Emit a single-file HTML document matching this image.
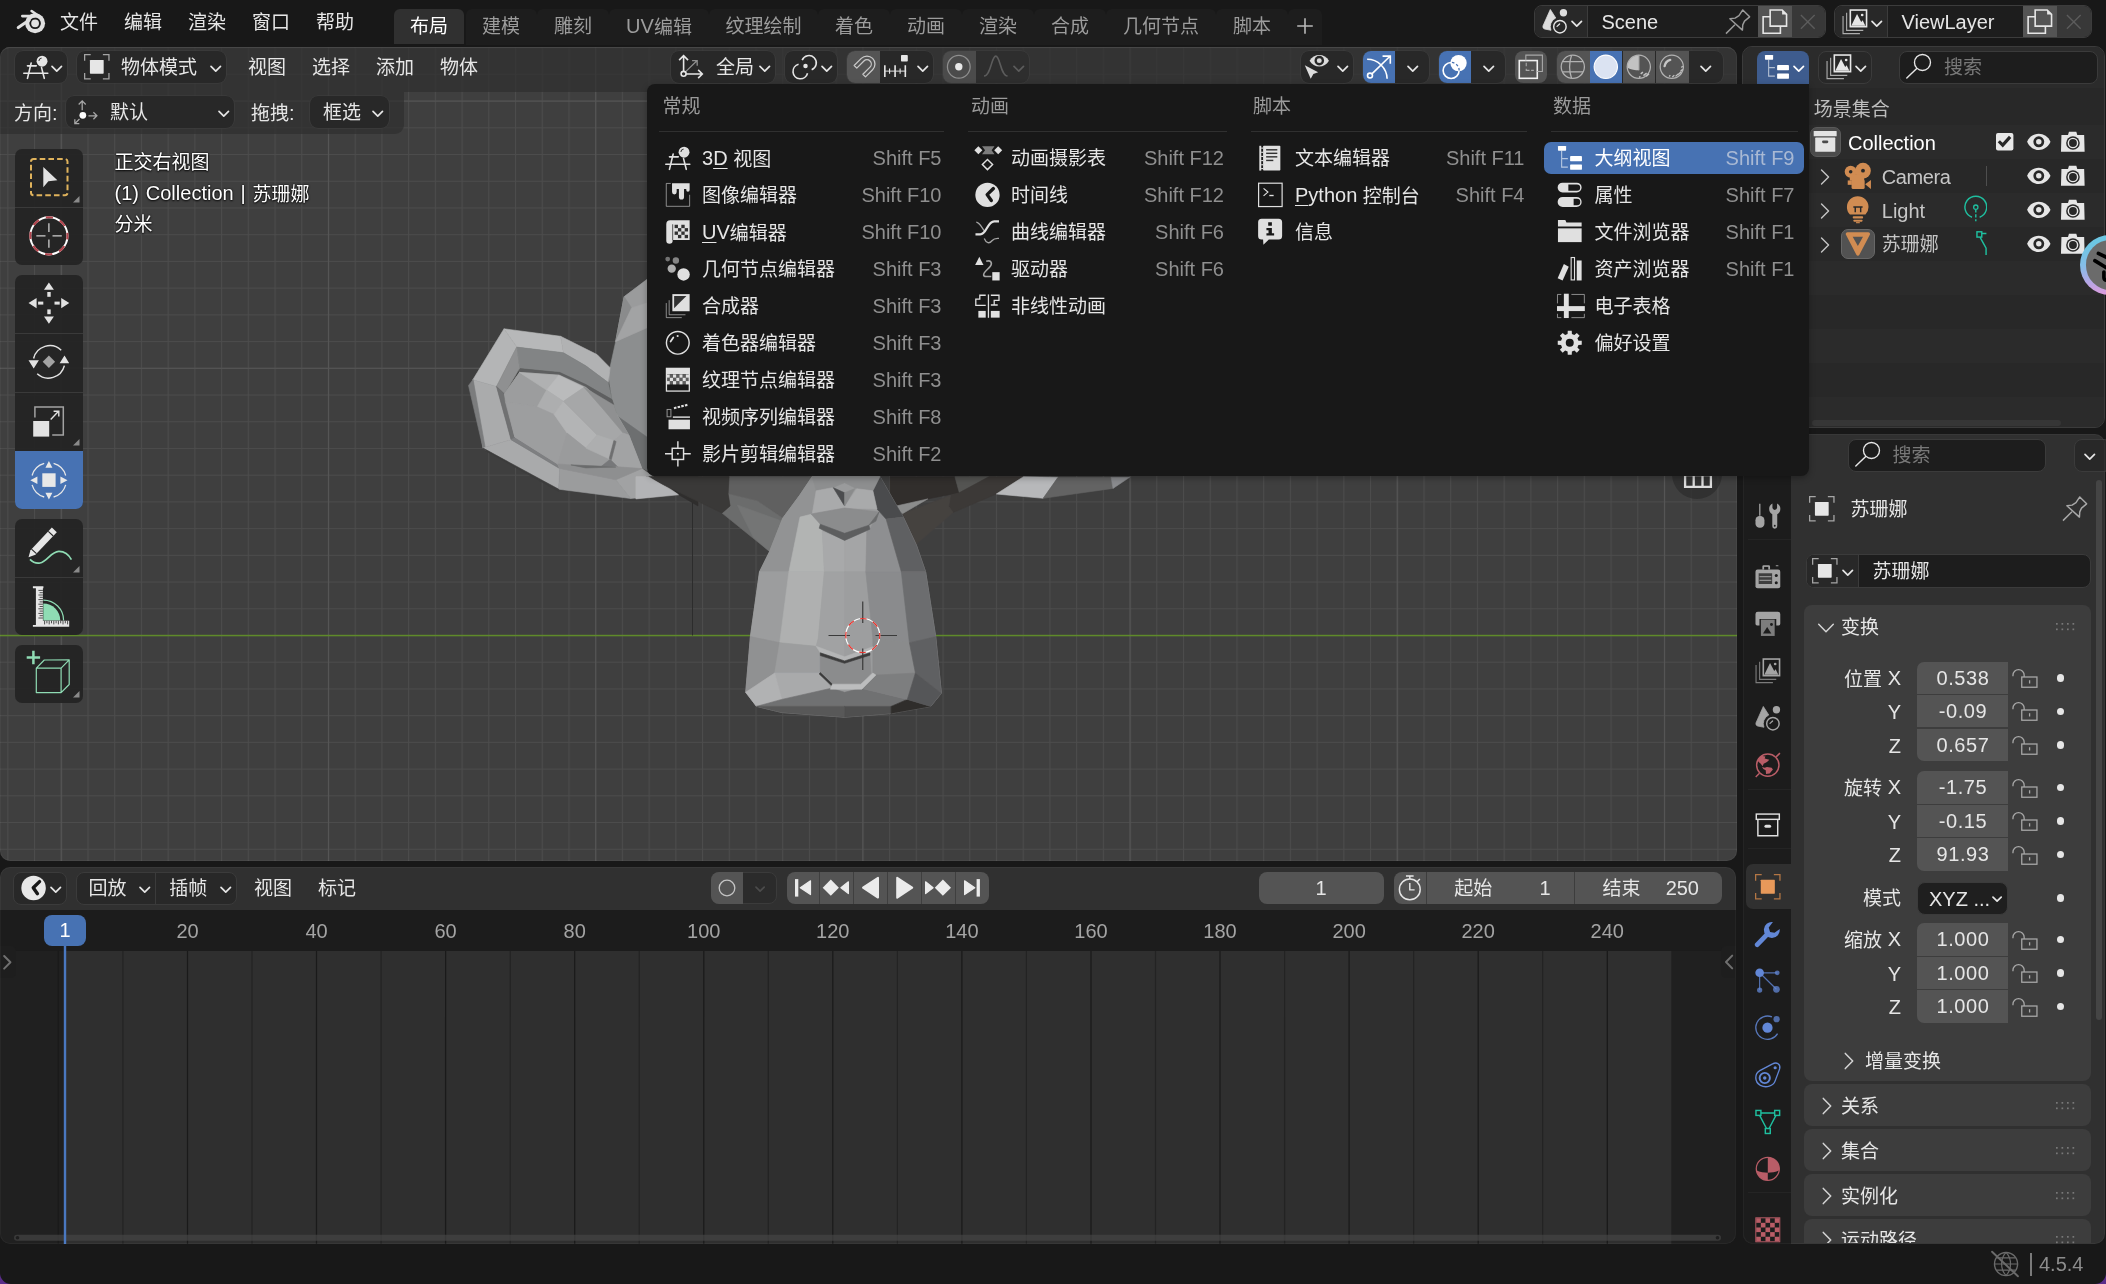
<!DOCTYPE html>
<html lang="zh-CN"><head><meta charset="utf-8"><title>Blender</title>
<style>
html,body{margin:0;padding:0;}
body{width:2106px;height:1284px;overflow:hidden;position:relative;background:#181818;font-family:"Liberation Sans","Noto Sans CJK SC",sans-serif;font-size:19px;color:#e6e6e6;}
.t{position:absolute;white-space:nowrap;}
.l{font-size:20px;}
.m{position:relative;top:-1px;}
u{text-decoration-thickness:1.2px;text-underline-offset:3px;}
.b{position:absolute;box-sizing:border-box;}
.i{position:absolute;overflow:visible;}
.sh{text-shadow:0 0 2px rgba(0,0,0,.9),0 1px 2px rgba(0,0,0,.8);}
</style></head><body><div id="root" style="position:absolute;left:0;top:0;width:2106px;height:1284px;will-change:transform;">
<svg class="i" viewBox="15 7 32 32" style="left:15.0px;top:7.0px;width:32.0px;height:32.0px;color:#e0e0e0;"><circle cx="35.1" cy="23.3" r="10" fill="currentColor"/><circle cx="35.1" cy="23.3" r="4.85" stroke="#181818" stroke-width="1.9" fill="none"/><path d="M31.6 11L39.6 16.6M22.3 16.1H35" stroke="currentColor" fill="none" stroke-width="2.6" stroke-linecap="round"/><path d="M18.3 27.6L29 20.2" stroke="currentColor" fill="none" stroke-width="3.1" stroke-linecap="round"/></svg>
<div class="t " style="top:8.0px;line-height:30px;color:#e6e6e6;left:60.0px;">文件</div>
<div class="t " style="top:8.0px;line-height:30px;color:#e6e6e6;left:124.0px;">编辑</div>
<div class="t " style="top:8.0px;line-height:30px;color:#e6e6e6;left:188.0px;">渲染</div>
<div class="t " style="top:8.0px;line-height:30px;color:#e6e6e6;left:252.0px;">窗口</div>
<div class="t " style="top:8.0px;line-height:30px;color:#e6e6e6;left:316.0px;">帮助</div>
<div class="b " style="left:466.0px;top:8.7px;width:856.0px;height:36.8px;background:#1d1d1d;border-radius:6px 6px 0 0;"></div>
<div class="b " style="left:466.0px;top:8.7px;width:71.0px;height:21.3px;background:#181818;border-radius:0px;"></div>
<div class="b " style="left:466.0px;top:8.7px;width:71.0px;height:21.3px;background:#1d1d1d;border-radius:6px 6px 0 0;"></div>
<div class="b " style="left:537.0px;top:8.7px;width:72.0px;height:21.3px;background:#181818;border-radius:0px;"></div>
<div class="b " style="left:537.0px;top:8.7px;width:72.0px;height:21.3px;background:#1d1d1d;border-radius:6px 6px 0 0;"></div>
<div class="b " style="left:609.0px;top:8.7px;width:100.0px;height:21.3px;background:#181818;border-radius:0px;"></div>
<div class="b " style="left:609.0px;top:8.7px;width:100.0px;height:21.3px;background:#1d1d1d;border-radius:6px 6px 0 0;"></div>
<div class="b " style="left:709.0px;top:8.7px;width:109.0px;height:21.3px;background:#181818;border-radius:0px;"></div>
<div class="b " style="left:709.0px;top:8.7px;width:109.0px;height:21.3px;background:#1d1d1d;border-radius:6px 6px 0 0;"></div>
<div class="b " style="left:818.0px;top:8.7px;width:72.0px;height:21.3px;background:#181818;border-radius:0px;"></div>
<div class="b " style="left:818.0px;top:8.7px;width:72.0px;height:21.3px;background:#1d1d1d;border-radius:6px 6px 0 0;"></div>
<div class="b " style="left:890.0px;top:8.7px;width:72.0px;height:21.3px;background:#181818;border-radius:0px;"></div>
<div class="b " style="left:890.0px;top:8.7px;width:72.0px;height:21.3px;background:#1d1d1d;border-radius:6px 6px 0 0;"></div>
<div class="b " style="left:962.0px;top:8.7px;width:72.0px;height:21.3px;background:#181818;border-radius:0px;"></div>
<div class="b " style="left:962.0px;top:8.7px;width:72.0px;height:21.3px;background:#1d1d1d;border-radius:6px 6px 0 0;"></div>
<div class="b " style="left:1034.0px;top:8.7px;width:72.0px;height:21.3px;background:#181818;border-radius:0px;"></div>
<div class="b " style="left:1034.0px;top:8.7px;width:72.0px;height:21.3px;background:#1d1d1d;border-radius:6px 6px 0 0;"></div>
<div class="b " style="left:1106.0px;top:8.7px;width:110.0px;height:21.3px;background:#181818;border-radius:0px;"></div>
<div class="b " style="left:1106.0px;top:8.7px;width:110.0px;height:21.3px;background:#1d1d1d;border-radius:6px 6px 0 0;"></div>
<div class="b " style="left:1216.0px;top:8.7px;width:72.0px;height:21.3px;background:#181818;border-radius:0px;"></div>
<div class="b " style="left:1216.0px;top:8.7px;width:72.0px;height:21.3px;background:#1d1d1d;border-radius:6px 6px 0 0;"></div>
<div class="b " style="left:1288.0px;top:8.7px;width:34.0px;height:21.3px;background:#181818;border-radius:0px;"></div>
<div class="b " style="left:1288.0px;top:8.7px;width:34.0px;height:21.3px;background:#1d1d1d;border-radius:6px 6px 0 0;"></div>
<div class="b " style="left:394.0px;top:8.9px;width:70.1px;height:35.1px;background:#303030;border-radius:6px 6px 0 0;"></div>
<div class="t " style="top:12.0px;line-height:30px;color:#ffffff;left:129.0px;width:600px;text-align:center;">布局</div>
<div class="t " style="top:12.0px;line-height:30px;color:#9c9c9c;left:201.0px;width:600px;text-align:center;">建模</div>
<div class="t " style="top:12.0px;line-height:30px;color:#9c9c9c;left:273.0px;width:600px;text-align:center;">雕刻</div>
<div class="t " style="top:12.0px;line-height:30px;color:#9c9c9c;left:359.0px;width:600px;text-align:center;"><span class="l m">UV</span>编辑</div>
<div class="t " style="top:12.0px;line-height:30px;color:#9c9c9c;left:463.5px;width:600px;text-align:center;">纹理绘制</div>
<div class="t " style="top:12.0px;line-height:30px;color:#9c9c9c;left:554.0px;width:600px;text-align:center;">着色</div>
<div class="t " style="top:12.0px;line-height:30px;color:#9c9c9c;left:626.0px;width:600px;text-align:center;">动画</div>
<div class="t " style="top:12.0px;line-height:30px;color:#9c9c9c;left:698.0px;width:600px;text-align:center;">渲染</div>
<div class="t " style="top:12.0px;line-height:30px;color:#9c9c9c;left:770.0px;width:600px;text-align:center;">合成</div>
<div class="t " style="top:12.0px;line-height:30px;color:#9c9c9c;left:861.0px;width:600px;text-align:center;">几何节点</div>
<div class="t " style="top:12.0px;line-height:30px;color:#9c9c9c;left:952.0px;width:600px;text-align:center;">脚本</div>
<svg class="i" style="left:1296px;top:17px;width:18px;height:18px" viewBox="0 0 18 18"><path d="M9 1.2V16.8M1.2 9H16.8" stroke="#b8b8b8" stroke-width="1.6" fill="none"/></svg>
<div class="b " style="left:1534.0px;top:5.0px;width:292.0px;height:33.0px;background:#1d1d1d;border-radius:8px;border:1px solid #3c3c3c;overflow:hidden;"><div class="b" style="left:0;top:0;width:52.5px;height:33px;background:#282828;border-right:1px solid #3c3c3c"></div><div class="b" style="left:222.5px;top:0;width:34px;height:33px;background:#545454"></div><div class="b" style="left:256.5px;top:0;width:36px;height:33px;background:#383838"></div></div>
<svg class="i" viewBox="0 0 16 16" style="left:1542.2px;top:9.2px;width:25.6px;height:25.6px;color:#e6e6e6;"><path d="M5.2 .3L8.6 5.6A6.04 6.04 0 0 0 5.6 13.3L1.6 12.5Q.2 12 .6 10.6Z" fill="#dcdcdc" stroke="#dcdcdc" stroke-width=".5" stroke-linejoin="round"/><circle cx="13.4" cy="2.35" r="2.3" fill="#dcdcdc"/><circle cx="11.2" cy="11.05" r="3.9" stroke="#e6e6e6" fill="none" stroke-width=".9"/><path d="M9.4 10.85L11 9.4" stroke="#e6e6e6" fill="none" stroke-width=".8" stroke-linecap="round"/></svg>
<svg class="i" style="left:1570.0px;top:16.8px;width:13.5px;height:13.5px" viewBox="-6.73 -6.73 13.46 13.46"><path d="M-4.73 -2.36 L0 2.36 L4.73 -2.36" fill="none" stroke="#e6e6e6" stroke-width="1.7" stroke-linecap="round" stroke-linejoin="round"/></svg>
<div class="t " style="top:7.2px;line-height:30px;color:#e6e6e6;left:1601.5px;"><span class="l">Scene</span></div>
<svg class="i" viewBox="0 0 16 16" style="left:1725.2px;top:9.2px;width:25.6px;height:25.6px;color:#9a9a9a;"><path d="M3.05 6.15L6.3 5.7L8.75 4.1L11.1 .6L15.4 4.9L12.2 7.55L11.1 9.9L10.9 13.2ZM.6 15.4L6.2 9.8" stroke="currentColor" fill="none" stroke-width=".9" stroke-linejoin="round"/></svg>
<svg class="i" viewBox="0 0 16 16" style="left:1761.5px;top:9.2px;width:25.6px;height:25.6px;color:#e6e6e6;"><path d="M5.1 .65H12.6L15.35 3.4V10.7H5.1Z" stroke="currentColor" fill="none" stroke-width="1"/><path d="M12.6 .65V3.4H15.35Z" fill="currentColor"/><path d="M5.1 4.8H.7V15.2H11.5V10.7" stroke="currentColor" fill="none" stroke-width="1"/></svg>
<svg class="i" viewBox="0 0 16 16" style="left:1795.4px;top:9.2px;width:25.6px;height:25.6px;color:#5c5c5c;"><path d="M3.7 3.7L12.3 12.3M12.3 3.7L3.7 12.3" stroke="currentColor" fill="none" stroke-width=".85"/></svg>
<div class="b " style="left:1834.0px;top:5.0px;width:258.0px;height:33.0px;background:#1d1d1d;border-radius:8px;border:1px solid #3c3c3c;overflow:hidden;"><div class="b" style="left:0;top:0;width:52.5px;height:33px;background:#282828;border-right:1px solid #3c3c3c"></div><div class="b" style="left:188.2px;top:0;width:34.2px;height:33px;background:#545454"></div><div class="b" style="left:222.4px;top:0;width:36px;height:33px;background:#383838"></div></div>
<svg class="i" viewBox="0 0 16 16" style="left:1842.0px;top:9.0px;width:25.6px;height:25.6px;color:#e6e6e6;"><rect x="5.2" y=".65" width="10.15" height="10.4" stroke="currentColor" fill="none" stroke-width="1"/><path d="M5.8 10.5L9.4 3.2L12 8.2L12.9 7L14.6 10.5Z" fill="currentColor"/><circle cx="12.6" cy="3.75" r=".85" fill="currentColor"/><path d="M2.9 2.3V13.4H13.3M.65 4.4V15.4H11.2" stroke="currentColor" fill="none" stroke-width=".7" opacity=".7"/></svg>
<svg class="i" style="left:1869.8px;top:16.8px;width:13.5px;height:13.5px" viewBox="-6.73 -6.73 13.46 13.46"><path d="M-4.73 -2.36 L0 2.36 L4.73 -2.36" fill="none" stroke="#e6e6e6" stroke-width="1.7" stroke-linecap="round" stroke-linejoin="round"/></svg>
<div class="t " style="top:7.2px;line-height:30px;color:#e6e6e6;left:1901.5px;"><span class="l">ViewLayer</span></div>
<svg class="i" viewBox="0 0 16 16" style="left:2027.3px;top:9.2px;width:25.6px;height:25.6px;color:#e6e6e6;"><path d="M5.1 .65H12.6L15.35 3.4V10.7H5.1Z" stroke="currentColor" fill="none" stroke-width="1"/><path d="M12.6 .65V3.4H15.35Z" fill="currentColor"/><path d="M5.1 4.8H.7V15.2H11.5V10.7" stroke="currentColor" fill="none" stroke-width="1"/></svg>
<svg class="i" viewBox="0 0 16 16" style="left:2061.2px;top:9.2px;width:25.6px;height:25.6px;color:#5c5c5c;"><path d="M3.7 3.7L12.3 12.3M12.3 3.7L3.7 12.3" stroke="currentColor" fill="none" stroke-width=".85"/></svg>
<div class="b" style="left:0.0px;top:46.5px;width:1737.0px;height:814.0px;background:#3f3f3f;border-radius:10px;overflow:hidden;">
<svg class="i" style="left:0;top:0;width:1737.0px;height:814.0px" viewBox="0 46.5 1737.0 814.0">
<defs>
<pattern id="g1" x="60.75" y="634.5" width="26.72" height="26.72" patternUnits="userSpaceOnUse"><path d="M0 .5H26.72M.5 0V26.72" stroke="#4c4c4c" stroke-width="1.1" fill="none"/></pattern>
<pattern id="g2" x="60.75" y="634.5" width="267.2" height="267.2" patternUnits="userSpaceOnUse"><path d="M0 .5H267.2M.5 0V267.2" stroke="#555555" stroke-width="1.2" fill="none"/></pattern>
</defs>
<rect x="0" y="46" width="1737" height="815" fill="url(#g1)"/>
<rect x="0" y="46" width="1737" height="815" fill="url(#g2)"/>
<rect x="0" y="634.3" width="1737" height="1.5" fill="#5f8a2a"/>
<rect x="692" y="476" width="1" height="159" fill="#2c2c2c"/>

<g>
<polygon points="647.5,278.4 624.2,296.2 615.7,341.0 608.3,374.7 612.0,399.0 617.6,415.8 628.8,434.5 641.9,468.1 649.4,471.9 649.4,278.4" fill="#8c8e8f" stroke="#8c8e8f" stroke-width=".6"/>
<polygon points="624.2,296.2 649.4,277.5 649.4,326.1 615.7,341.0" fill="#9a9b9c" stroke="#9a9b9c" stroke-width=".6"/>
<polygon points="624.2,296.2 631.6,307.4 615.7,341.0" fill="#8a8b8c" stroke="#8a8b8c" stroke-width=".6"/>
<polygon points="631.6,307.4 649.4,301.8 649.4,326.1 615.7,341.0" fill="#a2a3a4" stroke="#a2a3a4" stroke-width=".6"/>
<polygon points="617.6,415.8 649.4,438.2 649.4,472.8 641.9,468.1 628.8,434.5" fill="#6d6f70" stroke="#6d6f70" stroke-width=".6"/>
<polygon points="641.9,468.1 649.4,471.9 698.0,471.9 698.0,501.8 677.4,493.4" fill="#444444" stroke="#444444" stroke-width=".6"/>
<polygon points="647.5,470.9 698.0,475.6 698.0,505.5 677.4,493.4" fill="#2f2e2d" stroke="#2f2e2d" stroke-width=".6"/>
<polygon points="504.0,328.3 560.6,335.8 563.4,352.2 516.7,346.6" fill="#b7b8b9" stroke="#b7b8b9" stroke-width=".6"/>
<polygon points="560.6,335.8 597.1,354.1 610.1,367.2 608.3,382.1 585.8,365.3 563.4,352.2" fill="#b1b2b3" stroke="#b1b2b3" stroke-width=".6"/>
<polygon points="504.0,328.3 516.7,346.6 496.5,385.9 472.8,379.3" fill="#b4b5b6" stroke="#b4b5b6" stroke-width=".6"/>
<polygon points="472.8,379.3 496.5,385.9 511.1,439.2 483.0,447.6" fill="#aaabac" stroke="#aaabac" stroke-width=".6"/>
<polygon points="468.5,385.0 473.1,379.0 485.8,450.4 483.0,447.6" fill="#7b7c7d" stroke="#7b7c7d" stroke-width=".6"/>
<polygon points="483.0,447.6 511.1,439.2 559.7,468.1 558.7,488.7" fill="#a9aaab" stroke="#a9aaab" stroke-width=".6"/>
<polygon points="558.7,488.7 559.7,468.1 615.7,479.3 630.7,498.0" fill="#9b9c9d" stroke="#9b9c9d" stroke-width=".6"/>
<polygon points="615.7,479.3 641.9,468.1 677.4,493.4 630.7,498.0" fill="#a1a2a3" stroke="#a1a2a3" stroke-width=".6"/>
<polygon points="483.0,447.6 485.8,450.4 558.7,490.9 558.7,488.7" fill="#3d3d3d" stroke="#3d3d3d" stroke-width=".6"/>
<polygon points="516.7,346.6 563.4,352.2 585.8,365.3 608.3,382.1 612.0,399.0 585.8,384.0 559.7,371.9 519.5,368.1" fill="#828485" stroke="#828485" stroke-width=".6"/>
<polygon points="519.5,368.1 559.7,371.9 585.8,384.0 612.0,399.0 613.9,404.6 584.0,387.4 558.7,375.0 518.6,371.9" fill="#5e5f60" stroke="#5e5f60" stroke-width=".6"/>
<polygon points="516.7,346.6 519.5,368.1 504.5,393.4 496.5,385.9" fill="#8f9091" stroke="#8f9091" stroke-width=".6"/>
<polygon points="496.5,385.9 504.5,393.4 514.8,436.4 511.1,439.2" fill="#707172" stroke="#707172" stroke-width=".6"/>
<polygon points="511.1,439.2 514.8,436.4 557.8,463.5 559.7,468.1" fill="#7e7f81" stroke="#7e7f81" stroke-width=".6"/>
<polygon points="519.5,371.9 559.7,374.7 585.8,386.8 615.7,412.1 628.8,434.5 641.9,468.1 615.7,479.3 559.7,468.1 557.8,463.5 514.8,436.4 504.5,393.4" fill="#a3a4a5" stroke="#a3a4a5" stroke-width=".6"/>
<polygon points="504.5,393.4 519.5,371.9 546.6,389.6 537.2,406.4 505.5,401.8" fill="#9c9d9e" stroke="#9c9d9e" stroke-width=".6"/>
<polygon points="519.5,371.9 558.7,374.7 546.6,389.6" fill="#b0b1b2" stroke="#b0b1b2" stroke-width=".6"/>
<polygon points="546.6,389.6 558.7,374.7 584.0,386.8 563.4,400.8" fill="#babbbc" stroke="#babbbc" stroke-width=".6"/>
<polygon points="537.2,406.4 546.6,389.6 563.4,400.8 554.1,413.9" fill="#adaeaf" stroke="#adaeaf" stroke-width=".6"/>
<polygon points="505.5,401.8 537.2,406.4 554.1,413.9 567.1,432.6 557.8,463.5 514.8,436.4" fill="#9d9e9f" stroke="#9d9e9f" stroke-width=".6"/>
<polygon points="554.1,413.9 563.4,400.8 597.1,434.5 585.8,447.6 567.1,432.6" fill="#b3b4b5" stroke="#b3b4b5" stroke-width=".6"/>
<polygon points="563.4,400.8 584.0,386.8 604.5,410.2 623.2,432.6 613.9,440.1 597.1,434.5" fill="#a6a7a8" stroke="#a6a7a8" stroke-width=".6"/>
<polygon points="584.0,386.8 613.9,404.6 617.6,415.8 628.8,434.5 623.2,432.6 604.5,410.2" fill="#8f9091" stroke="#8f9091" stroke-width=".6"/>
<polygon points="567.1,432.6 585.8,447.6 610.1,458.8 600.8,466.3 570.9,464.4 557.8,463.5" fill="#9a9b9c" stroke="#9a9b9c" stroke-width=".6"/>
<polygon points="585.8,447.6 597.1,434.5 613.9,440.1 610.1,458.8" fill="#adaeaf" stroke="#adaeaf" stroke-width=".6"/>
<polygon points="613.9,440.1 623.2,432.6 628.8,434.5 641.9,468.1 617.6,466.3 610.1,458.8" fill="#a2a3a4" stroke="#a2a3a4" stroke-width=".6"/>
<polygon points="613.9,440.1 616.1,441.0 611.3,459.2 609.2,457.9" fill="#6e6f70" stroke="#6e6f70" stroke-width=".6"/>
<polygon points="610.1,458.8 617.6,466.3 600.8,466.3" fill="#77787a" stroke="#77787a" stroke-width=".6"/>
<polygon points="570.9,464.4 600.8,466.3 617.6,466.3 641.9,468.1 615.7,479.3 559.7,468.1 557.8,463.5" fill="#8e8f90" stroke="#8e8f90" stroke-width=".6"/>
<polygon points="570.9,464.4 597.1,465.5 615.7,466.6 585.8,467.4" fill="#6a6b6c" stroke="#6a6b6c" stroke-width=".6"/>
<polygon points="729.1,476.1 812.2,476.1 800.0,494.3 782.8,517.6 757.5,500.4 728.1,493.3" fill="#606060" stroke="#606060" stroke-width=".6"/>
<polygon points="728.1,493.3 757.5,500.4 782.8,517.6 769.6,551.0 722.0,512.5 730.1,505.4" fill="#6b6c6c" stroke="#6b6c6c" stroke-width=".6"/>
<polygon points="737.2,504.4 781.8,520.6 769.6,551.0 753.4,536.8" fill="#747575" stroke="#747575" stroke-width=".6"/>
<polygon points="646.1,476.1 729.1,476.1 728.1,493.3 730.1,505.4 722.0,512.5" fill="#3a3938" stroke="#3a3938" stroke-width=".6"/>
<polygon points="635.9,476.1 648.1,476.1 678.5,494.3 635.9,498.4" fill="#b3b4b6" stroke="#b3b4b6" stroke-width=".6"/>
<polygon points="890.1,476.2 954.9,476.2 959.3,492.2 890.1,505.8" fill="#312e2c" stroke="#312e2c" stroke-width=".6"/>
<polygon points="954.9,476.2 988.9,476.2 959.3,492.2" fill="#545452" stroke="#545452" stroke-width=".6"/>
<polygon points="988.9,476.2 1023.5,476.2 996.3,493.5 953.1,512.0 948.8,505.8 950.6,494.7 959.3,492.2" fill="#3c3937" stroke="#3c3937" stroke-width=".6"/>
<polygon points="902.5,513.2 950.6,494.7 948.8,505.8 953.1,512.0 916.0,544.1" fill="#45423f" stroke="#45423f" stroke-width=".6"/>
<polygon points="895.1,505.8 927.8,498.4 902.5,513.2" fill="#8b8c8c" stroke="#8b8c8c" stroke-width=".6"/>
<polygon points="1023.5,476.2 1058.0,476.8 1043.2,497.8 996.3,493.5" fill="#b7b8ba" stroke="#b7b8ba" stroke-width=".6"/>
<polygon points="1058.0,476.8 1111.1,476.8 1113.0,487.9 1043.2,497.8" fill="#636363" stroke="#636363" stroke-width=".6"/>
<polygon points="1111.1,476.8 1129.6,476.8 1113.0,487.9" fill="#8a8b8e" stroke="#8a8b8e" stroke-width=".6"/>
<polygon points="812.2,476.1 880.0,476.1 903.3,516.6 916.5,544.9 925.6,571.3 935.7,636.1 941.4,692.8 930.6,705.9 891.1,713.0 844.6,716.7 781.8,712.0 756.5,705.9 745.7,691.8 750.4,636.1 759.5,571.3 769.6,551.0 782.8,517.6 800.0,494.3" fill="#9a9b9c" stroke="#9a9b9c" stroke-width=".6"/>
<polygon points="782.8,517.6 800.0,494.3 812.2,476.1 816.2,490.3 812.2,513.5 800.0,516.6 795.9,536.8 788.9,571.3 759.5,571.3 769.6,551.0" fill="#929394" stroke="#929394" stroke-width=".6"/>
<polygon points="759.5,571.3 788.9,571.3 779.7,642.2 750.4,636.1" fill="#9c9d9e" stroke="#9c9d9e" stroke-width=".6"/>
<polygon points="800.0,516.6 812.2,513.5 820.3,523.7 822.3,530.8 824.3,571.3 788.9,571.3 795.9,536.8" fill="#b2b4b3" stroke="#b2b4b3" stroke-width=".6"/>
<polygon points="788.9,571.3 824.3,571.3 818.2,638.1 816.2,645.8 779.7,642.2" fill="#afb0b0" stroke="#afb0b0" stroke-width=".6"/>
<polygon points="822.3,530.8 844.6,539.9 844.6,571.3 824.3,571.3" fill="#a8a9aa" stroke="#a8a9aa" stroke-width=".6"/>
<polygon points="824.3,571.3 844.6,571.3 844.6,656.3 816.2,645.8 818.2,638.1" fill="#a1a2a3" stroke="#a1a2a3" stroke-width=".6"/>
<polygon points="844.6,539.9 866.8,530.8 865.8,571.3 844.6,571.3" fill="#a4a5a6" stroke="#a4a5a6" stroke-width=".6"/>
<polygon points="844.6,571.3 865.8,571.3 872.9,638.1 872.9,646.2 844.6,656.3" fill="#9d9e9f" stroke="#9d9e9f" stroke-width=".6"/>
<polygon points="866.8,530.8 869.9,528.7 879.0,511.5 886.1,518.6 901.3,571.3 865.8,571.3" fill="#8e8f91" stroke="#8e8f91" stroke-width=".6"/>
<polygon points="865.8,571.3 901.3,571.3 909.4,642.2 872.9,638.1" fill="#8a8b8d" stroke="#8a8b8d" stroke-width=".6"/>
<polygon points="880.0,476.1 903.3,516.6 886.1,518.6 877.0,508.5 872.9,490.3" fill="#4a4b4d" stroke="#4a4b4d" stroke-width=".6"/>
<polygon points="886.1,518.6 903.3,516.6 916.5,544.9 925.6,571.3 901.3,571.3" fill="#5f6062" stroke="#5f6062" stroke-width=".6"/>
<polygon points="901.3,571.3 925.6,571.3 935.7,636.1 909.4,642.2" fill="#6c6d6f" stroke="#6c6d6f" stroke-width=".6"/>
<polygon points="750.4,636.1 779.7,642.2 774.7,672.5 745.7,691.8" fill="#909192" stroke="#909192" stroke-width=".6"/>
<polygon points="779.7,642.2 816.2,645.8 820.3,654.7 820.3,672.5 774.7,672.5" fill="#9c9d9e" stroke="#9c9d9e" stroke-width=".6"/>
<polygon points="774.7,672.5 820.3,672.5 831.4,687.7 781.8,698.9" fill="#a9aaab" stroke="#a9aaab" stroke-width=".6"/>
<polygon points="745.7,691.8 774.7,672.5 781.8,698.9 756.5,705.9" fill="#b1b2b3" stroke="#b1b2b3" stroke-width=".6"/>
<polygon points="781.8,698.9 831.4,687.7 844.6,691.8 860.8,687.7 907.3,698.9 891.1,705.9 844.6,705.9 756.5,705.9" fill="#707172" stroke="#707172" stroke-width=".6"/>
<polygon points="756.5,705.9 844.6,705.9 844.6,716.7 781.8,712.0" fill="#585858" stroke="#585858" stroke-width=".6"/>
<polygon points="844.6,705.9 891.1,705.9 891.1,713.0 844.6,716.7" fill="#4f4f4f" stroke="#4f4f4f" stroke-width=".6"/>
<polygon points="891.1,705.9 907.3,698.9 930.6,705.9 891.1,713.0" fill="#2f2d2b" stroke="#2f2d2b" stroke-width=".6"/>
<polygon points="872.9,638.1 909.4,642.2 915.4,672.5 875.9,674.6 872.9,672.5" fill="#8a8b8c" stroke="#8a8b8c" stroke-width=".6"/>
<polygon points="875.9,674.6 915.4,672.5 907.3,698.9 860.8,687.7" fill="#7d7e7f" stroke="#7d7e7f" stroke-width=".6"/>
<polygon points="909.4,642.2 935.7,636.1 941.4,692.8 915.4,672.5" fill="#5f6062" stroke="#5f6062" stroke-width=".6"/>
<polygon points="915.4,672.5 941.4,692.8 930.6,705.9 907.3,698.9" fill="#555658" stroke="#555658" stroke-width=".6"/>
<polygon points="820.3,654.7 844.6,662.4 869.9,654.3 870.9,672.5 860.8,684.7 832.4,684.7 820.3,672.5" fill="#8b8c8d" stroke="#8b8c8d" stroke-width=".6"/>
<polygon points="816.2,645.8 844.6,656.3 872.9,646.2 869.9,652.3 844.6,660.4 820.3,652.3" fill="#b4b5b6" stroke="#b4b5b6" stroke-width=".6"/>
<polygon points="820.3,652.3 844.6,660.4 869.9,652.3 869.9,654.7 844.6,662.8 820.3,655.1" fill="#3c3c3c" stroke="#3c3c3c" stroke-width=".6"/>
<polygon points="820.3,672.1 832.4,683.7 831.4,685.1 819.2,673.5" fill="#3a3a3a" stroke="#3a3a3a" stroke-width=".6"/>
<polygon points="832.4,683.7 860.8,683.7 872.9,672.5 875.9,674.6 861.8,688.7 830.4,688.7" fill="#bcbdbe" stroke="#bcbdbe" stroke-width=".6"/>
<polygon points="812.2,476.1 880.0,476.1 872.9,490.3 856.7,488.2 844.6,482.2 832.4,487.2 816.2,490.3" fill="#8d8e8f" stroke="#8d8e8f" stroke-width=".6"/>
<polygon points="816.2,490.3 832.4,487.2 844.6,506.5 856.7,488.2 872.9,490.3 877.0,508.5 844.6,507.5 812.2,513.5" fill="#a9aaab" stroke="#a9aaab" stroke-width=".6"/>
<polygon points="833.4,487.2 844.6,492.3 844.6,505.4" fill="#4c4d4f" stroke="#4c4d4f" stroke-width=".6"/>
<polygon points="844.6,492.3 854.7,488.2 844.6,505.4" fill="#8a8b8c" stroke="#8a8b8c" stroke-width=".6"/>
<polygon points="811.1,513.5 844.6,507.5 879.0,511.5 868.9,524.7 844.6,532.8 820.3,523.7" fill="#8b8c8d" stroke="#8b8c8d" stroke-width=".6"/>
<polygon points="820.3,523.7 844.6,532.8 868.9,524.7 869.9,528.7 844.6,539.9 819.2,527.7" fill="#5d5e5f" stroke="#5d5e5f" stroke-width=".6"/>
<polygon points="868.9,524.7 879.0,511.5 875.9,520.6" fill="#6a6b6c" stroke="#6a6b6c" stroke-width=".6"/>
</g>
<g fill="none">
<path d="M828.5 635H850M875.5 635H897M862.75 601V622.5M862.75 648V669.5" stroke="#3a3a3a" stroke-width="1.2"/>
<circle cx="862.75" cy="635" r="17" stroke="#ffffff" stroke-width="1.15"/>
<circle cx="862.75" cy="635" r="17" stroke="#e8302a" stroke-width="1.15" stroke-dasharray="6.68 6.68" stroke-dashoffset="3.3"/>
</g>
</svg>
</div>
<div class="b " style="left:0.0px;top:46.5px;width:1737.0px;height:45.5px;background:rgba(47,47,47,.72);border-radius:10px 10px 0 0;border-top:1px solid rgba(255,255,255,.05);"></div>
<div class="b " style="left:0.0px;top:92.0px;width:404.0px;height:42.0px;background:rgba(47,47,47,.72);border-radius:0 0 9px 0;"></div>
<div class="b " style="left:15.0px;top:51.0px;width:52.0px;height:32.0px;background:#282828;border-radius:8px;box-shadow:0 0 0 .6px #404040;"></div>
<svg class="i" viewBox="0 0 16 16" style="left:22.5px;top:54.2px;width:25.6px;height:25.6px;color:#e6e6e6;"><circle cx="11.9" cy="4.5" r="3.4" fill="currentColor"/><path d="M9.9 4.3A2.2 2.2 0 0 1 11.6 2.5" stroke="rgba(0,0,0,.78)" stroke-width=".7" fill="none"/><path d="M2.8 7.4H8.3M.5 12H15.5M5.1 5.6L2.8 15.2M11.6 8.5L13.3 15.2" stroke="currentColor" fill="none" stroke-width="1" stroke-linecap="round"/></svg>
<svg class="i" style="left:50.2px;top:62.1px;width:13.5px;height:13.5px" viewBox="-6.73 -6.73 13.46 13.46"><path d="M-4.73 -2.36 L0 2.36 L4.73 -2.36" fill="none" stroke="#e6e6e6" stroke-width="1.7" stroke-linecap="round" stroke-linejoin="round"/></svg>
<div class="b " style="left:77.0px;top:51.0px;width:149.0px;height:32.0px;background:#282828;border-radius:8px;box-shadow:0 0 0 .6px #404040;"></div>
<svg class="i" viewBox="0 0 16 16" style="left:84.1px;top:54.2px;width:25.6px;height:25.6px;color:#e6e6e6;"><rect x="3.7" y="3.7" width="8.6" height="8.6" rx=".4" fill="currentColor"/><path d="M.4 4.2V.4H4.2M11.8 .4H15.6V4.2M.4 11.8V15.6H4.2M11.8 15.6H15.6V11.8" stroke="currentColor" fill="none" stroke-width=".8" opacity=".65"/></svg>
<div class="t " style="top:53.0px;line-height:30px;color:#e6e6e6;left:121.0px;">物体模式</div>
<svg class="i" style="left:208.8px;top:62.1px;width:13.5px;height:13.5px" viewBox="-6.73 -6.73 13.46 13.46"><path d="M-4.73 -2.36 L0 2.36 L4.73 -2.36" fill="none" stroke="#e6e6e6" stroke-width="1.7" stroke-linecap="round" stroke-linejoin="round"/></svg>
<div class="t " style="top:53.0px;line-height:30px;color:#e6e6e6;left:248.0px;">视图</div>
<div class="t " style="top:53.0px;line-height:30px;color:#e6e6e6;left:312.0px;">选择</div>
<div class="t " style="top:53.0px;line-height:30px;color:#e6e6e6;left:376.0px;">添加</div>
<div class="t " style="top:53.0px;line-height:30px;color:#e6e6e6;left:440.0px;">物体</div>
<div class="b " style="left:671.0px;top:51.0px;width:104.0px;height:32.0px;background:#282828;border-radius:8px;box-shadow:0 0 0 .6px #404040;"></div>
<svg class="i" viewBox="0 0 16 16" style="left:678.2px;top:54.2px;width:25.6px;height:25.6px;color:#e6e6e6;"><circle cx="3.5" cy="12.4" r="1.55" stroke="currentColor" fill="none" stroke-width="1"/><path d="M3.5 10.8V1M.7 3.8L3.5 1L6.3 3.8M5.1 12.5H15.2M12.6 9.9L15.2 12.5L12.6 15.1" stroke="currentColor" fill="none" stroke-width="1"/><path d="M4.8 11L12 4.1M8.8 4.1H12V7.3" stroke="currentColor" fill="none" stroke-width=".8" opacity=".55"/></svg>
<div class="t " style="top:53.0px;line-height:30px;color:#e6e6e6;left:716.0px;">全局</div>
<svg class="i" style="left:758.0px;top:62.1px;width:13.5px;height:13.5px" viewBox="-6.73 -6.73 13.46 13.46"><path d="M-4.73 -2.36 L0 2.36 L4.73 -2.36" fill="none" stroke="#e6e6e6" stroke-width="1.7" stroke-linecap="round" stroke-linejoin="round"/></svg>
<div class="b " style="left:785.0px;top:51.0px;width:52.0px;height:32.0px;background:#282828;border-radius:8px;box-shadow:0 0 0 .6px #404040;"></div>
<svg class="i" viewBox="0 0 16 16" style="left:792.2px;top:54.2px;width:25.6px;height:25.6px;color:#e6e6e6;"><circle cx="8.45" cy="7.55" r="1.4" fill="currentColor"/><path d="M6.35 3.8A4.6 4.6 0 1 1 12.3 9.85" stroke="currentColor" fill="none" stroke-width="1"/><path d="M9.7 12A4.6 4.6 0 1 1 4.1 6.45" stroke="currentColor" fill="none" stroke-width="1"/></svg>
<svg class="i" style="left:819.9px;top:62.1px;width:13.5px;height:13.5px" viewBox="-6.73 -6.73 13.46 13.46"><path d="M-4.73 -2.36 L0 2.36 L4.73 -2.36" fill="none" stroke="#e6e6e6" stroke-width="1.7" stroke-linecap="round" stroke-linejoin="round"/></svg>
<div class="b " style="left:847.0px;top:51.0px;width:86.0px;height:32.0px;background:#282828;border-radius:8px;box-shadow:0 0 0 .6px #404040;"></div>
<div class="b " style="left:847.0px;top:51.0px;width:32.5px;height:32.0px;background:#545454;border-radius:8px 0 0 8px;"></div>
<svg class="i" viewBox="0 0 16 16" style="left:850.2px;top:54.2px;width:25.6px;height:25.6px;color:#c8c8c8;"><path d="M2.61 7.22L7.06 2.76A5.00 5.00 0 0 1 14.14 9.84L9.68 14.29L8.05 12.66L12.51 8.21A2.70 2.70 0 0 0 8.69 4.39L4.24 8.85Z" stroke="currentColor" fill="none" stroke-width=".8" stroke-linejoin="round"/></svg>
<svg class="i" viewBox="0 0 16 16" style="left:883.2px;top:54.2px;width:25.6px;height:25.6px;color:#e6e6e6;"><rect x="11.25" y=".55" width="4.25" height="4.15" rx=".5" fill="currentColor"/><path d="M.9 10.7H14.5" stroke="currentColor" fill="none" stroke-width=".6"/><path d="M1.15 7V14.45M7.55 7V14.45M13.95 7V14.45" stroke="currentColor" fill="none" stroke-width="1"/><path d="M4.1 9.1V12.3M10.7 9.1V12.3" stroke="currentColor" fill="none" stroke-width=".7"/></svg>
<svg class="i" style="left:915.9px;top:62.1px;width:13.5px;height:13.5px" viewBox="-6.73 -6.73 13.46 13.46"><path d="M-4.73 -2.36 L0 2.36 L4.73 -2.36" fill="none" stroke="#e6e6e6" stroke-width="1.7" stroke-linecap="round" stroke-linejoin="round"/></svg>
<div class="b " style="left:943.0px;top:51.0px;width:86.0px;height:32.0px;background:#2e2e2e;border-radius:8px;box-shadow:0 0 0 .6px #404040;"></div>
<div class="b " style="left:943.0px;top:51.0px;width:32.5px;height:32.0px;background:#4b4b4b;border-radius:8px 0 0 8px;"></div>
<svg class="i" viewBox="0 0 16 16" style="left:946.2px;top:54.2px;width:25.6px;height:25.6px;color:#a8a8a8;"><circle cx="8" cy="8" r="7.1" stroke="#8e8e8e" fill="none" stroke-width=".8"/><circle cx="8" cy="8" r="2.3" fill="#e8e8e8"/></svg>
<svg class="i" viewBox="0 0 16 16" style="left:983.2px;top:54.2px;width:25.6px;height:25.6px;color:#5c5c5c;"><path d="M.6 13.75C5 13.75 5.2 1.3 8 1.3C10.8 1.3 11 13.75 15.35 13.75" stroke="currentColor" fill="none" stroke-width="1"/></svg>
<svg class="i" style="left:1011.9px;top:62.1px;width:13.5px;height:13.5px" viewBox="-6.73 -6.73 13.46 13.46"><path d="M-4.73 -2.36 L0 2.36 L4.73 -2.36" fill="none" stroke="#5c5c5c" stroke-width="1.7" stroke-linecap="round" stroke-linejoin="round"/></svg>
<div class="b " style="left:1301.0px;top:51.0px;width:52.0px;height:32.0px;background:#282828;border-radius:8px;box-shadow:0 0 0 .6px #404040;"></div>
<svg class="i" viewBox="0 0 16 16" style="left:1304.2px;top:54.2px;width:25.6px;height:25.6px;color:#e6e6e6;"><path d="M3.5 4.2C6 -.6 13.1 -.6 15.6 4.2C13.1 9 6 9 3.5 4.2Z" fill="#dcdcdc"/><circle cx="9.55" cy="4.15" r="3" fill="#282828"/><circle cx="9.55" cy="4.15" r="1.55" fill="#dcdcdc"/><path d="M.5 7.1L8.85 11.4L5.85 12.5L4.2 15.4Z" fill="#dcdcdc"/></svg>
<svg class="i" style="left:1335.9px;top:62.1px;width:13.5px;height:13.5px" viewBox="-6.73 -6.73 13.46 13.46"><path d="M-4.73 -2.36 L0 2.36 L4.73 -2.36" fill="none" stroke="#e6e6e6" stroke-width="1.7" stroke-linecap="round" stroke-linejoin="round"/></svg>
<div class="b " style="left:1363.0px;top:51.0px;width:66.0px;height:32.0px;background:#282828;border-radius:8px;box-shadow:0 0 0 .6px #404040;"></div>
<div class="b " style="left:1363.0px;top:51.0px;width:32.0px;height:32.0px;background:#4772b3;border-radius:8px 0 0 8px;"></div>
<svg class="i" viewBox="0 0 16 16" style="left:1366.2px;top:54.2px;width:25.6px;height:25.6px;color:#ffffff;"><circle cx="2.5" cy="13.5" r="1.55" stroke="currentColor" fill="none" stroke-width="1"/><path d="M3.7 12.4L15 1.4M10.35 1.3H15.2V6.1M.7 3.3A12.5 12.5 0 0 1 13.2 15.5" stroke="currentColor" fill="none" stroke-width="1"/></svg>
<svg class="i" style="left:1405.5px;top:62.1px;width:13.5px;height:13.5px" viewBox="-6.73 -6.73 13.46 13.46"><path d="M-4.73 -2.36 L0 2.36 L4.73 -2.36" fill="none" stroke="#e6e6e6" stroke-width="1.7" stroke-linecap="round" stroke-linejoin="round"/></svg>
<div class="b " style="left:1439.0px;top:51.0px;width:66.0px;height:32.0px;background:#282828;border-radius:8px;box-shadow:0 0 0 .6px #404040;"></div>
<div class="b " style="left:1439.0px;top:51.0px;width:32.0px;height:32.0px;background:#4772b3;border-radius:8px 0 0 8px;"></div>
<svg class="i" viewBox="0 0 16 16" style="left:1442.2px;top:54.2px;width:25.6px;height:25.6px;color:#ffffff;"><circle cx="5.7" cy="10.3" r="5" stroke="currentColor" fill="none" stroke-width="1"/><circle cx="10.35" cy="5.7" r="5.1" fill="currentColor"/><path d="M6.2 5.3A5 5 0 0 1 10.7 10.6" stroke="#4772b3" stroke-width=".8" fill="none" stroke-dasharray="1.6 1.3"/></svg>
<svg class="i" style="left:1481.5px;top:62.1px;width:13.5px;height:13.5px" viewBox="-6.73 -6.73 13.46 13.46"><path d="M-4.73 -2.36 L0 2.36 L4.73 -2.36" fill="none" stroke="#e6e6e6" stroke-width="1.7" stroke-linecap="round" stroke-linejoin="round"/></svg>
<div class="b " style="left:1515.0px;top:51.0px;width:32.0px;height:32.0px;background:#545454;border-radius:8px;"></div>
<svg class="i" viewBox="0 0 16 16" style="left:1518.2px;top:54.2px;width:25.6px;height:25.6px;color:#d0d0d0;"><rect x=".8" y="4.1" width="11.25" height="11.1" stroke="#f0f0f0" fill="none" stroke-width="1"/><path d="M4.9 4.1V.7H15.25V10.9H12M5.15 5.5V7.7M5.15 9.2V10.2H7.2M8.2 10.2H9.9" stroke="#a8a8a8" fill="none" stroke-width=".7"/></svg>
<div class="b " style="left:1557.0px;top:51.0px;width:165.5px;height:32.0px;background:#282828;border-radius:8px;box-shadow:0 0 0 .6px #404040;"></div>
<div class="b " style="left:1557.0px;top:51.0px;width:33.0px;height:32.0px;background:#545454;border-radius:8px 0 0 8px;"></div>
<svg class="i" viewBox="0 0 16 16" style="left:1560.2px;top:54.2px;width:25.6px;height:25.6px;color:#d0d0d0;"><g stroke="#b2b2b2" fill="none" stroke-width=".8"><circle cx="8" cy="8" r="7.25"/><path d="M1.6 4.8H14.4M1.6 11.2H14.4M7.2 .8C5.8 5 5.8 11 7.2 15.2"/></g></svg>
<div class="b " style="left:1590.0px;top:51.0px;width:32.0px;height:32.0px;background:#4772b3;border-radius:0px;"></div>
<svg class="i" viewBox="0 0 16 16" style="left:1593.2px;top:54.2px;width:25.6px;height:25.6px;color:#ffffff;"><circle cx="8" cy="8" r="7.3" fill="#dbe3f2" stroke="#ffffff" stroke-width=".7"/></svg>
<div class="b " style="left:1622.5px;top:51.0px;width:32.5px;height:32.0px;background:#545454;border-radius:0px;"></div>
<svg class="i" viewBox="0 0 16 16" style="left:1626.2px;top:54.2px;width:25.6px;height:25.6px;color:#d0d0d0;"><path d="M8 .8A7.2 7.2 0 0 0 .8 8.6C3 10 6 10.2 8 10.2Z" fill="#c2c2c2"/><g stroke="#b2b2b2" fill="none" stroke-width=".8"><circle cx="8" cy="8" r="7.25"/><path d="M8 .8V10.2"/></g><path d="M9.2 12.4L10.6 11.3M10.9 13.5L12.9 11.9M12.6 14L14.4 12.4M8.2 14.7L9 14" stroke="#c2c2c2" stroke-width=".9" fill="none"/></svg>
<div class="b " style="left:1655.5px;top:51.0px;width:33.5px;height:32.0px;background:#545454;border-radius:0px;"></div>
<svg class="i" viewBox="0 0 16 16" style="left:1659.2px;top:54.2px;width:25.6px;height:25.6px;color:#d0d0d0;"><g fill="none"><circle cx="8" cy="8" r="7.25" stroke="#b2b2b2" stroke-width=".8"/><path d="M3.5 7.6A5 5 0 0 1 7 3.7" stroke="#c6c6c6" stroke-width="1.5" stroke-linecap="round"/><path d="M6.3 14L7.1 13.3M8.3 14.4L9.6 13.3M10.3 14L12 12.5M12 12.8L13.9 11M13.4 10.9L14.8 9.5M14 8.4L14.8 7.6" stroke="#c2c2c2" stroke-width=".8"/></g></svg>
<svg class="i" style="left:1698.5px;top:62.1px;width:13.5px;height:13.5px" viewBox="-6.73 -6.73 13.46 13.46"><path d="M-4.73 -2.36 L0 2.36 L4.73 -2.36" fill="none" stroke="#e6e6e6" stroke-width="1.7" stroke-linecap="round" stroke-linejoin="round"/></svg>
<div class="t " style="top:98.0px;line-height:30px;color:#e6e6e6;left:14.0px;">方向<span class="l">:</span></div>
<div class="b " style="left:66.0px;top:96.0px;width:168.0px;height:32.0px;background:#282828;border-radius:8px;box-shadow:0 0 0 .6px #404040;"></div>
<svg class="i" viewBox="0 0 16 16" style="left:70.6px;top:99.2px;width:25.6px;height:25.6px;color:#a8a8a8;"><circle cx="7.4" cy="10.2" r="2.1" fill="#ffffff"/><path d="M7 7.1V1.2M4.8 3.4L7 1.2L9.2 3.4M10.9 10.5H16.2M14 8.3L16.2 10.5L14 12.7M5.3 12.5L2.4 15.4M2.4 12.6V15.4H5.2" stroke="currentColor" fill="none" stroke-width=".8"/></svg>
<div class="t " style="top:98.0px;line-height:30px;color:#e6e6e6;left:110.0px;">默认</div>
<svg class="i" style="left:216.7px;top:107.3px;width:13.5px;height:13.5px" viewBox="-6.73 -6.73 13.46 13.46"><path d="M-4.73 -2.36 L0 2.36 L4.73 -2.36" fill="none" stroke="#e6e6e6" stroke-width="1.7" stroke-linecap="round" stroke-linejoin="round"/></svg>
<div class="t " style="top:98.0px;line-height:30px;color:#e6e6e6;left:251.0px;">拖拽<span class="l">:</span></div>
<div class="b " style="left:310.0px;top:96.0px;width:79.0px;height:32.0px;background:#282828;border-radius:8px;box-shadow:0 0 0 .6px #404040;"></div>
<div class="t " style="top:98.0px;line-height:30px;color:#e6e6e6;left:323.0px;">框选</div>
<svg class="i" style="left:371.3px;top:106.8px;width:13.5px;height:13.5px" viewBox="-6.73 -6.73 13.46 13.46"><path d="M-4.73 -2.36 L0 2.36 L4.73 -2.36" fill="none" stroke="#e6e6e6" stroke-width="1.7" stroke-linecap="round" stroke-linejoin="round"/></svg>
<div class="t sh" style="top:148.0px;line-height:30px;color:#ffffff;left:114.5px;">正交右视图</div>
<div class="t sh" style="top:179.0px;line-height:30px;color:#ffffff;left:114.5px;word-spacing:1.3px;"><span class="l m">(1) Collection | </span>苏珊娜</div>
<div class="t sh" style="top:210.0px;line-height:30px;color:#ffffff;left:114.5px;">分米</div>
<div class="b " style="left:15.0px;top:149.0px;width:68.0px;height:116.0px;background:rgba(36,36,36,.96);border-radius:7px;"></div>
<div class="b " style="left:15.0px;top:206.5px;width:68.0px;height:1.0px;background:#3a3a3a;border-radius:0px;"></div>
<div class="b " style="left:15.0px;top:275.0px;width:68.0px;height:234.0px;background:rgba(36,36,36,.96);border-radius:7px;"></div>
<div class="b " style="left:15.0px;top:333.0px;width:68.0px;height:1.0px;background:#3a3a3a;border-radius:0px;"></div>
<div class="b " style="left:15.0px;top:391.5px;width:68.0px;height:1.0px;background:#3a3a3a;border-radius:0px;"></div>
<div class="b " style="left:15.0px;top:450.5px;width:68.0px;height:58.5px;background:#4772b3;border-radius:0 0 7px 7px;"></div>
<div class="b " style="left:15.0px;top:519.0px;width:68.0px;height:116.0px;background:rgba(36,36,36,.96);border-radius:7px;"></div>
<div class="b " style="left:15.0px;top:576.5px;width:68.0px;height:1.0px;background:#3a3a3a;border-radius:0px;"></div>
<div class="b " style="left:15.0px;top:645.0px;width:68.0px;height:58.0px;background:rgba(36,36,36,.96);border-radius:7px;"></div>
<svg class="i" style="left:15px;top:149px;width:68px;height:555px" viewBox="15 149 68 555">
<rect x="31" y="159" width="36.5" height="36.2" rx="2.5" fill="none" stroke="#e0b35c" stroke-width="2" stroke-dasharray="5.6 3.1" stroke-dashoffset="2.5"/>
<path d="M43.3 167L57.4 180.3L48.4 181.2L43.3 187.2Z" fill="#e2e2e2"/>
<circle cx="48.9" cy="235.8" r="18.6" fill="none" stroke="#ffffff" stroke-width="2"/>
<circle cx="48.9" cy="235.8" r="18.6" fill="none" stroke="#b3444d" stroke-width="2" stroke-dasharray="7.3 7.3" stroke-dashoffset="3.65"/>
<path d="M36.3 235.8H45.5M52.5 235.8H61.8M48.9 223.2V232M48.9 239.5V247.8" stroke="#cfcfcf" stroke-width="1.3" fill="none"/>
<g fill="#e2e2e2"><path d="M44 289.8H53.9L48.9 282.4ZM44 316.4H53.9L48.9 323.8ZM36.6 297.9V308.3L28.5 303.1ZM61.2 297.9V308.3L69.3 303.1Z"/><rect x="47.3" y="292" width="3.4" height="4.8"/><rect x="47.3" y="309.4" width="3.4" height="4.8"/><rect x="38.1" y="301.6" width="5.2" height="3"/><rect x="54.5" y="301.6" width="5.2" height="3"/></g>
<path d="M33.6 358.5A16.6 16.6 0 0 1 61.2 350.2M64.4 365.6A16.6 16.6 0 0 1 37.2 373.8" fill="none" stroke="#e2e2e2" stroke-width="1.5"/>
<path d="M28.5 360.3H38.9L33.7 368.5ZM59.6 363.3H69.2L64.5 355.5Z" fill="#e2e2e2"/><path d="M48.9 355.6L55.1 361.8L48.9 368L42.7 361.8Z" fill="#a2a2a2"/>
<path d="M34.9 417.5V407H63.3V435.1H52.2" fill="none" stroke="#a2a2a2" stroke-width="1.5"/><rect x="33.2" y="421" width="16" height="15.6" fill="#e2e2e2"/><path d="M50.7 419.5L58.3 411.6M53.6 411.2H58.8V416.6" fill="none" stroke="#e2e2e2" stroke-width="1.4"/>
<rect x="42.3" y="473.3" width="13.3" height="13.6" fill="#e8e8e8"/>
<g fill="none" stroke="#e8e8e8" stroke-width="1.3"><path d="M53.6 463.4A17.5 17.5 0 0 1 65.7 475.5M65.7 484.9A17.5 17.5 0 0 1 53.6 497M44.2 497A17.5 17.5 0 0 1 32.1 484.9M32.1 475.5A17.5 17.5 0 0 1 44.2 463.4"/></g>
<path d="M45.4 467.7H52.4L48.9 461ZM45.4 492.7H52.4L48.9 499.4ZM37.4 476.5V483.9L30.3 480.2ZM60.4 476.5V483.9L67.5 480.2Z" fill="#e8e8e8"/>
<path d="M30 559.4C33 562.5 36.5 563.6 40 563C47 561.8 51 551.5 58.8 551.3C65 551.2 69 555 71.4 559.6" fill="none" stroke="#8fdcb4" stroke-width="1.7"/>
<g transform="translate(28.5 557.2) rotate(-46.6)"><path d="M0 0L6.5 -3.4H37.6V3.4H6.5Z" fill="#e6e6e6"/><path d="M8 -3.4V3.4M32.4 -3.4V3.4" stroke="#262626" stroke-width="1.1"/></g>
<path d="M43.3 603.4A17 17 0 0 1 60.3 620.4H43.3Z" fill="#8fdcb4"/><path d="M43.3 600.1A20.3 20.3 0 0 1 63.6 620.4" fill="none" stroke="#8fdcb4" stroke-width="1.2"/>
<path d="M32.9 586.3H43.4V588.2H42.9V620.8H69.2V626.8H32.9V624.9H35.9V588.2H32.9Z" fill="#e6e6e6"/>
<path d="M38.4 590.4H42.9M39.6 592.7H42.9M38.4 595.0H42.9M39.6 597.3H42.9M38.4 599.6H42.9M39.6 601.9H42.9M38.4 604.2H42.9M39.6 606.5H42.9M38.4 608.8H42.9M39.6 611.1H42.9M38.4 613.4H42.9M39.6 615.7H42.9M38.4 618.0H42.9" stroke="#262626" stroke-width=".8" fill="none"/>
<path d="M44.6 620.8V624.4M46.9 620.8V623.3M49.2 620.8V624.4M51.5 620.8V623.3M53.8 620.8V624.4M56.1 620.8V623.3M58.4 620.8V624.4M60.7 620.8V623.3M63.0 620.8V624.4M65.3 620.8V623.3M67.6 620.8V624.4" stroke="#262626" stroke-width=".8" fill="none"/>
<path d="M33.4 650.8V664.2M26.7 657.5H40.1" stroke="#8fdcb4" stroke-width="2.5" fill="none"/>
<path d="M36.3 668.2H61.1V692.6H36.3ZM36.3 668.2L44.3 660L69.2 659.8L61.1 668.2M69.2 659.8V684.5L61.1 692.6" fill="none" stroke="#8fdcb4" stroke-width="1.2" stroke-linejoin="round"/>
</svg>
<svg class="i" style="left:72.5px;top:195.5px;width:6.5px;height:6.5px" viewBox="0 0 6 6"><path d="M6 0V6H0Z" fill="#8a8a8a"/></svg>
<svg class="i" style="left:72.5px;top:439.2px;width:6.5px;height:6.5px" viewBox="0 0 6 6"><path d="M6 0V6H0Z" fill="#8a8a8a"/></svg>
<svg class="i" style="left:72.5px;top:566.2px;width:6.5px;height:6.5px" viewBox="0 0 6 6"><path d="M6 0V6H0Z" fill="#8a8a8a"/></svg>
<svg class="i" style="left:72.5px;top:691.0px;width:6.5px;height:6.5px" viewBox="0 0 6 6"><path d="M6 0V6H0Z" fill="#8a8a8a"/></svg>
<div class="b" style="left:1672.2px;top:449px;width:50px;height:50px;border-radius:25px;background:rgba(40,40,40,.62)"></div>
<svg class="i" style="left:1683px;top:473px;width:30px;height:16px" viewBox="1683 473 30 16"><path d="M1685.1 475.2H1710.9V486.8H1685.1ZM1693.7 475.2V486.8M1702.5 475.2V486.8" fill="none" stroke="#dcdcdc" stroke-width="2.3"/></svg>
<div class="b" style="left:0.0px;top:866.5px;width:1736.3px;height:377.0px;background:#1d1d1d;border-radius:10px;overflow:hidden;">
<svg class="i" style="left:0;top:0;width:1736.3px;height:377.0px" viewBox="0 866.5 1736.3 377.0">
<rect x="0" y="866" width="1737" height="43.7" fill="#303030"/>
<rect x="0" y="909.7" width="1737" height="40.7" fill="#1c1c1c"/>
<rect x="0" y="950.4" width="1737" height="294" fill="#202020"/>
<rect x="64.9" y="950.4" width="1606.9" height="294" fill="#2f2f2f"/>
<path d="M58.4 950.4V1244M187.5 950.4V1244M316.5 950.4V1244M445.6 950.4V1244M574.7 950.4V1244M703.8 950.4V1244M832.8 950.4V1244M961.9 950.4V1244M1091.0 950.4V1244M1220.0 950.4V1244M1349.1 950.4V1244M1478.2 950.4V1244M1607.3 950.4V1244M1736.3 950.4V1244" stroke="#1a1a1a" stroke-width="1.25" fill="none"/>
<path d="M122.9 950.4V1244M252.0 950.4V1244M381.1 950.4V1244M510.2 950.4V1244M639.2 950.4V1244M768.3 950.4V1244M897.4 950.4V1244M1026.4 950.4V1244M1155.5 950.4V1244M1284.6 950.4V1244M1413.7 950.4V1244M1542.7 950.4V1244M1671.8 950.4V1244" stroke="#232323" stroke-width="1.2" fill="none"/>
<rect x="14" y="1234.3" width="1707" height="6" rx="3" fill="#454545" opacity=".7"/>
<circle cx="17.5" cy="1237.3" r="1.8" fill="#1e1e1e"/><circle cx="1717.5" cy="1237.3" r="1.8" fill="#1e1e1e"/>
<rect x="63.8" y="930" width="2.4" height="314" fill="#4a78c0"/>
</svg>
</div>
<div class="b " style="left:0.0px;top:946.0px;width:15.7px;height:32.0px;background:#1e1e1e;border-radius:0 5px 5px 0;"></div>
<svg class="i" style="left:-1.2px;top:953.7px;width:16.6px;height:16.6px" viewBox="-8.32 -8.32 16.65 16.65"><path d="M-3.16 -6.32 L3.16 0 L-3.16 6.32" fill="none" stroke="#707070" stroke-width="2" stroke-linecap="round" stroke-linejoin="round"/></svg>
<div class="b " style="left:1720.6px;top:946.0px;width:15.7px;height:32.0px;background:#1e1e1e;border-radius:5px 0 0 5px;"></div>
<svg class="i" style="left:1724px;top:954px;width:10px;height:16px" viewBox="0 0 10 16"><path d="M8.2 1.6L2 8L8.2 14.4" fill="none" stroke="#707070" stroke-width="2" stroke-linecap="round" stroke-linejoin="round"/></svg>
<div class="t " style="top:915.8px;line-height:30px;color:#a4a4a4;left:-112.5px;width:600px;text-align:center;"><span class="l">20</span></div>
<div class="t " style="top:915.8px;line-height:30px;color:#a4a4a4;left:16.5px;width:600px;text-align:center;"><span class="l">40</span></div>
<div class="t " style="top:915.8px;line-height:30px;color:#a4a4a4;left:145.6px;width:600px;text-align:center;"><span class="l">60</span></div>
<div class="t " style="top:915.8px;line-height:30px;color:#a4a4a4;left:274.7px;width:600px;text-align:center;"><span class="l">80</span></div>
<div class="t " style="top:915.8px;line-height:30px;color:#a4a4a4;left:403.8px;width:600px;text-align:center;"><span class="l">100</span></div>
<div class="t " style="top:915.8px;line-height:30px;color:#a4a4a4;left:532.8px;width:600px;text-align:center;"><span class="l">120</span></div>
<div class="t " style="top:915.8px;line-height:30px;color:#a4a4a4;left:661.9px;width:600px;text-align:center;"><span class="l">140</span></div>
<div class="t " style="top:915.8px;line-height:30px;color:#a4a4a4;left:791.0px;width:600px;text-align:center;"><span class="l">160</span></div>
<div class="t " style="top:915.8px;line-height:30px;color:#a4a4a4;left:920.0px;width:600px;text-align:center;"><span class="l">180</span></div>
<div class="t " style="top:915.8px;line-height:30px;color:#a4a4a4;left:1049.1px;width:600px;text-align:center;"><span class="l">200</span></div>
<div class="t " style="top:915.8px;line-height:30px;color:#a4a4a4;left:1178.2px;width:600px;text-align:center;"><span class="l">220</span></div>
<div class="t " style="top:915.8px;line-height:30px;color:#a4a4a4;left:1307.3px;width:600px;text-align:center;"><span class="l">240</span></div>
<div class="b " style="left:43.5px;top:915.0px;width:42.0px;height:31.0px;background:#4772b3;border-radius:8px;"></div>
<div class="t " style="top:915.4px;line-height:30px;color:#ffffff;left:-235.0px;width:600px;text-align:center;"><span class="l">1</span></div>
<div class="b " style="left:13.0px;top:871.5px;width:53.7px;height:33.0px;background:#282828;border-radius:8px;border:1px solid #3b3b3b;"></div>
<svg class="i" viewBox="0 0 16 16" style="left:21.2px;top:875.0px;width:25.8px;height:25.8px;color:#e8e8e8;"><circle cx="7.8" cy="8.05" r="7.6" fill="currentColor"/><path d="M11.5 4.1L7.6 7.9L10.2 11.6" stroke="#181818" stroke-width="2.1" fill="none" stroke-linecap="round" stroke-linejoin="round"/></svg>
<svg class="i" style="left:48.9px;top:882.6px;width:13.5px;height:13.5px" viewBox="-6.73 -6.73 13.46 13.46"><path d="M-4.73 -2.36 L0 2.36 L4.73 -2.36" fill="none" stroke="#e6e6e6" stroke-width="1.7" stroke-linecap="round" stroke-linejoin="round"/></svg>
<div class="b " style="left:75.5px;top:871.5px;width:161.0px;height:33.0px;background:#282828;border-radius:8px;border:1px solid #3b3b3b;"></div>
<div class="b " style="left:155.0px;top:872.0px;width:1.0px;height:32.0px;background:#3b3b3b;border-radius:0px;"></div>
<div class="t " style="top:874.0px;line-height:30px;color:#e6e6e6;left:88.6px;">回放</div>
<svg class="i" style="left:137.9px;top:882.7px;width:13.5px;height:13.5px" viewBox="-6.73 -6.73 13.46 13.46"><path d="M-4.73 -2.36 L0 2.36 L4.73 -2.36" fill="none" stroke="#e6e6e6" stroke-width="1.7" stroke-linecap="round" stroke-linejoin="round"/></svg>
<div class="t " style="top:874.0px;line-height:30px;color:#e6e6e6;left:169.2px;">插帧</div>
<svg class="i" style="left:218.7px;top:882.7px;width:13.5px;height:13.5px" viewBox="-6.73 -6.73 13.46 13.46"><path d="M-4.73 -2.36 L0 2.36 L4.73 -2.36" fill="none" stroke="#e6e6e6" stroke-width="1.7" stroke-linecap="round" stroke-linejoin="round"/></svg>
<div class="t " style="top:874.0px;line-height:30px;color:#e6e6e6;left:254.0px;">视图</div>
<div class="t " style="top:874.0px;line-height:30px;color:#e6e6e6;left:318.0px;">标记</div>
<div class="b " style="left:711.0px;top:871.7px;width:66.2px;height:32.7px;background:#2b2b2b;border-radius:8px;border:1px solid #3b3b3b;"></div>
<div class="b " style="left:711.0px;top:871.7px;width:32.4px;height:32.7px;background:#545454;border-radius:8px 0 0 8px;"></div>
<svg class="i" style="left:716.4px;top:876.7px;width:22px;height:22px" viewBox="0 0 22 22"><circle cx="11" cy="11" r="7.8" fill="none" stroke="#c4c4c4" stroke-width="1.3"/></svg>
<svg class="i" style="left:754.0px;top:883.2px;width:12.2px;height:12.2px" viewBox="-6.12 -6.12 12.25 12.25"><path d="M-4.12 -2.06 L0 2.06 L4.12 -2.06" fill="none" stroke="#4c4c4c" stroke-width="1.7" stroke-linecap="round" stroke-linejoin="round"/></svg>
<div class="b " style="left:786.9px;top:871.7px;width:202.3px;height:32.7px;background:#545454;border-radius:8px;"></div>
<div class="b " style="left:818.8px;top:871.7px;width:1.2px;height:32.7px;background:#3f3f3f;border-radius:0px;"></div>
<div class="b " style="left:852.8px;top:871.7px;width:1.2px;height:32.7px;background:#3f3f3f;border-radius:0px;"></div>
<div class="b " style="left:886.7px;top:871.7px;width:1.2px;height:32.7px;background:#3f3f3f;border-radius:0px;"></div>
<div class="b " style="left:920.6px;top:871.7px;width:1.2px;height:32.7px;background:#3f3f3f;border-radius:0px;"></div>
<div class="b " style="left:954.8px;top:871.7px;width:1.2px;height:32.7px;background:#3f3f3f;border-radius:0px;"></div>
<svg class="i" style="left:786px;top:871px;width:204px;height:34px" viewBox="786 871 204 34" fill="#ebebeb" stroke="#ebebeb" stroke-width="1.2" stroke-linejoin="round">
<rect x="795" y="879.1" width="3.3" height="17.5" stroke="none"/><path d="M800.3 887.7L810.5 880.8V894.6Z"/>
<path d="M830.8 879.6L838.9 887.7L830.8 895.8L822.7 887.7Z" stroke="none"/><path d="M840.9 887.7L848.4 881.8V893.6Z"/>
<path d="M863 887.7L878 877.8V897.6Z" stroke-width="2"/>
<path d="M897.2 877.8L912.2 887.7L897.2 897.6Z" stroke-width="2"/>
<path d="M925.6 881.8L933.1 887.7L925.6 893.6Z"/><path d="M942.9 879.6L951 887.7L942.9 895.8L934.8 887.7Z" stroke="none"/>
<path d="M964.6 880.8L974.8 887.7L964.6 894.6Z"/><rect x="976.6" y="879.1" width="3.3" height="17.5" stroke="none"/>
</svg>
<div class="b " style="left:1258.8px;top:871.8px;width:125.7px;height:32.5px;background:#545454;border-radius:8px;"></div>
<div class="t " style="top:873.0px;line-height:30px;color:#e6e6e6;left:1021.0px;width:600px;text-align:center;"><span class="l">1</span></div>
<div class="b " style="left:1393.8px;top:871.8px;width:328.5px;height:32.5px;background:#545454;border-radius:8px;"></div>
<div class="b " style="left:1426.0px;top:871.8px;width:1.0px;height:32.5px;background:#3d3d3d;border-radius:0px;"></div>
<div class="b " style="left:1573.7px;top:871.8px;width:1.0px;height:32.5px;background:#3d3d3d;border-radius:0px;"></div>
<svg class="i" viewBox="0 0 16 16" style="left:1396.8px;top:875.2px;width:25.6px;height:25.6px;color:#e6e6e6;"><circle cx="8" cy="9" r="6.5" stroke="currentColor" fill="none" stroke-width=".9"/><path d="M8 2.5V.6M5.6 .6H10.4M12.6 4.2L14.3 2.5M8 5V9.3H11" stroke="currentColor" fill="none" stroke-width=".9"/></svg>
<div class="t " style="top:874.0px;line-height:30px;color:#e6e6e6;left:1454.3px;">起始</div>
<div class="t " style="top:873.0px;line-height:30px;color:#e6e6e6;right:555.5px;"><span class="l">1</span></div>
<div class="t " style="top:874.0px;line-height:30px;color:#e6e6e6;left:1602.5px;">结束</div>
<div class="t " style="top:873.0px;line-height:30px;color:#e6e6e6;right:407.0px;"><span class="l">250</span></div>
<div class="b" style="left:1742.0px;top:46.3px;width:363.2px;height:382.0px;background:#282828;border-radius:10px;overflow:hidden;border:1px solid #3b3b3b;">
<div class="b" style="left:0;top:0;width:100%;height:41px;background:#2b2b2b"></div>
<div class="b" style="left:0;top:77.7px;width:100%;height:34px;background:#2b2b2b"></div>
<div class="b" style="left:0;top:145.7px;width:100%;height:34px;background:#2b2b2b"></div>
<div class="b" style="left:0;top:213.7px;width:100%;height:34px;background:#2b2b2b"></div>
<div class="b" style="left:0;top:281.7px;width:100%;height:34px;background:#2b2b2b"></div>
<div class="b" style="left:0;top:349.7px;width:100%;height:34px;background:#2b2b2b"></div>
</div>
<div class="b " style="left:1757.0px;top:50.5px;width:52.0px;height:33.5px;background:#3e5c8e;border-radius:8px 8px 0 0;"></div>
<svg class="i" viewBox="0 0 16 16" style="left:1764.2px;top:54.2px;width:25.6px;height:25.6px;color:#ffffff;"><rect x=".6" y=".6" width="5.1" height="2.95" rx=".4" fill="currentColor"/><rect x="8.2" y="6.9" width="7.4" height="3.3" rx=".3" fill="currentColor"/><rect x="8.2" y="12.15" width="7.4" height="3.35" rx=".3" fill="currentColor"/><path d="M2.9 3.55V13.8H6.8M2.9 8.55H6.8" stroke="currentColor" fill="none" stroke-width=".7" opacity=".6"/></svg>
<svg class="i" style="left:1791.8px;top:61.6px;width:13.5px;height:13.5px" viewBox="-6.73 -6.73 13.46 13.46"><path d="M-4.73 -2.36 L0 2.36 L4.73 -2.36" fill="none" stroke="#ffffff" stroke-width="1.7" stroke-linecap="round" stroke-linejoin="round"/></svg>
<div class="b " style="left:1818.3px;top:50.5px;width:53.5px;height:33.0px;background:#282828;border-radius:8px;border:1px solid #3b3b3b;"></div>
<svg class="i" viewBox="0 0 16 16" style="left:1826.2px;top:54.2px;width:25.6px;height:25.6px;color:#e6e6e6;"><rect x="5.2" y=".65" width="10.15" height="10.4" stroke="currentColor" fill="none" stroke-width="1"/><path d="M5.8 10.5L9.4 3.2L12 8.2L12.9 7L14.6 10.5Z" fill="currentColor"/><circle cx="12.6" cy="3.75" r=".85" fill="currentColor"/><path d="M2.9 2.3V13.4H13.3M.65 4.4V15.4H11.2" stroke="currentColor" fill="none" stroke-width=".7" opacity=".7"/></svg>
<svg class="i" style="left:1853.8px;top:61.6px;width:13.5px;height:13.5px" viewBox="-6.73 -6.73 13.46 13.46"><path d="M-4.73 -2.36 L0 2.36 L4.73 -2.36" fill="none" stroke="#e6e6e6" stroke-width="1.7" stroke-linecap="round" stroke-linejoin="round"/></svg>
<div class="b " style="left:1898.5px;top:50.5px;width:199.0px;height:33.0px;background:#1d1d1d;border-radius:8px;border:1px solid #3b3b3b;"></div>
<svg class="i" viewBox="0 0 16 16" style="left:1906.2px;top:54.2px;width:25.6px;height:25.6px;color:#e6e6e6;"><circle cx="10.3" cy="5.3" r="5" stroke="currentColor" fill="none" stroke-width=".85"/><path d="M6.7 9L.5 15" stroke="currentColor" fill="none" stroke-width=".9" stroke-linecap="round"/></svg>
<div class="t " style="top:52.5px;line-height:30px;color:#787878;left:1944.0px;">搜索</div>
<div class="t " style="top:94.8px;line-height:30px;color:#bdbdbd;left:1813.7px;">场景集合</div>
<div class="b " style="left:1810.4px;top:127.0px;width:30.6px;height:30.0px;background:#4c4c4c;border-radius:7px;border:1px solid #5a5a5a;"></div>
<svg class="i" viewBox="0 0 16 16" style="left:1813.0px;top:128.8px;width:24.5px;height:24.5px;color:#e4e4e4;"><rect x=".45" y="1.25" width="15" height="3.55" rx=".4" fill="currentColor"/><rect x="1.45" y="5.6" width="13.1" height="9.3" rx=".4" fill="currentColor"/><rect x="5.9" y="7.55" width="4.1" height="1.7" rx=".85" fill="#4a4a4a"/></svg>
<div class="t " style="top:128.3px;line-height:30px;color:#ffffff;left:1848.0px;"><span class="l">Collection</span></div>
<svg class="i" viewBox="0 0 16 16" style="left:1995.8px;top:132.8px;width:17.4px;height:17.4px;"><rect x="0" y="0" width="16" height="16" rx="1.8" fill="#e8e8e8"/><path d="M2.6 7.6L6.2 11.2L13 3.6" stroke="#262626" stroke-width="2.9" fill="none"/></svg>
<svg class="i" viewBox="0 0 16 16" style="left:2025.8px;top:129.2px;width:25.6px;height:25.6px;color:#e6e6e6;"><path d="M.7 8C3.5 1.2 12.5 1.2 15.3 8C12.5 14.8 3.5 14.8 .7 8Z" fill="currentColor"/><circle cx="8" cy="8" r="2.55" stroke="#282828" stroke-width="1.7" fill="none"/></svg>
<svg class="i" viewBox="0 0 16 16" style="left:2059.7px;top:129.2px;width:25.6px;height:25.6px;color:#e6e6e6;"><path d="M.9 3.7H5L5.6 1.75H10.2L10.8 3.7H15.1L15.4 14.25H.6Z" fill="currentColor"/><circle cx="8.1" cy="8.75" r="4.25" fill="#282828"/><circle cx="8.1" cy="8.75" r="3.35" fill="currentColor"/><circle cx="8.1" cy="8.75" r="2.45" fill="#282828"/></svg>
<svg class="i" style="left:1815.5px;top:168.0px;width:18.1px;height:18.1px" viewBox="-9.04 -9.04 18.08 18.08"><path d="M-3.52 -7.04 L3.52 0 L-3.52 7.04" fill="none" stroke="#c4c4c4" stroke-width="1.4" stroke-linecap="round" stroke-linejoin="round"/></svg>
<svg class="i" viewBox="0 0 16 16" style="left:1845.2px;top:163.2px;width:25.6px;height:25.6px;color:#d18c52;"><circle cx="3.55" cy="5.5" r="3.75" fill="currentColor"/><circle cx="11.25" cy="4.8" r="4.9" fill="currentColor"/><circle cx="3.55" cy="5.5" r="1.1" fill="#282828"/><circle cx="11.25" cy="4.8" r="1.2" fill="#282828"/><rect x="4.1" y="10.25" width="8.2" height="6" rx="1" fill="currentColor"/><rect x="3" y="7" width="9" height="4" fill="currentColor"/><path d="M12.6 13.3L16.2 10.6V16.2Z" fill="currentColor"/><rect x="1.7" y="10.9" width="2.6" height="2.75" fill="currentColor"/></svg>
<div class="t " style="top:161.6px;line-height:30px;color:#c6c6c6;left:1881.8px;letter-spacing:-.4px;"><span class="l">Camera</span></div>
<svg class="i" viewBox="0 0 16 16" style="left:2025.8px;top:163.2px;width:25.6px;height:25.6px;color:#e6e6e6;"><path d="M.7 8C3.5 1.2 12.5 1.2 15.3 8C12.5 14.8 3.5 14.8 .7 8Z" fill="currentColor"/><circle cx="8" cy="8" r="2.55" stroke="#282828" stroke-width="1.7" fill="none"/></svg>
<svg class="i" viewBox="0 0 16 16" style="left:2059.7px;top:163.2px;width:25.6px;height:25.6px;color:#e6e6e6;"><path d="M.9 3.7H5L5.6 1.75H10.2L10.8 3.7H15.1L15.4 14.25H.6Z" fill="currentColor"/><circle cx="8.1" cy="8.75" r="4.25" fill="#282828"/><circle cx="8.1" cy="8.75" r="3.35" fill="currentColor"/><circle cx="8.1" cy="8.75" r="2.45" fill="#282828"/></svg>
<div class="b " style="left:1986.0px;top:166.0px;width:1.0px;height:20.0px;background:#4e4e4e;border-radius:0px;"></div>
<svg class="i" style="left:1815.5px;top:202.2px;width:18.1px;height:18.1px" viewBox="-9.04 -9.04 18.08 18.08"><path d="M-3.52 -7.04 L3.52 0 L-3.52 7.04" fill="none" stroke="#c4c4c4" stroke-width="1.4" stroke-linecap="round" stroke-linejoin="round"/></svg>
<svg class="i" viewBox="0 0 16 16" style="left:1845.2px;top:197.4px;width:25.6px;height:25.6px;color:#d18c52;"><path d="M3.1 10.95A6.75 6.75 0 1 1 12.8 10.95Z" fill="currentColor"/><path d="M5.2 6.2H11M6.4 6.2V9.6M9.8 6.2V9.6" stroke="#282828" stroke-width=".9" fill="none"/><rect x="4.85" y="12" width="6.45" height="1.5" rx=".5" fill="currentColor"/><rect x="5.2" y="14.15" width="5.8" height="1.25" rx=".5" fill="currentColor"/><rect x="6.9" y="15.7" width="2.35" height=".7" fill="currentColor"/></svg>
<div class="t " style="top:195.8px;line-height:30px;color:#c6c6c6;left:1881.8px;"><span class="l">Light</span></div>
<svg class="i" viewBox="0 0 16 16" style="left:2025.8px;top:197.4px;width:25.6px;height:25.6px;color:#e6e6e6;"><path d="M.7 8C3.5 1.2 12.5 1.2 15.3 8C12.5 14.8 3.5 14.8 .7 8Z" fill="currentColor"/><circle cx="8" cy="8" r="2.55" stroke="#282828" stroke-width="1.7" fill="none"/></svg>
<svg class="i" viewBox="0 0 16 16" style="left:2059.7px;top:197.4px;width:25.6px;height:25.6px;color:#e6e6e6;"><path d="M.9 3.7H5L5.6 1.75H10.2L10.8 3.7H15.1L15.4 14.25H.6Z" fill="currentColor"/><circle cx="8.1" cy="8.75" r="4.25" fill="#282828"/><circle cx="8.1" cy="8.75" r="3.35" fill="currentColor"/><circle cx="8.1" cy="8.75" r="2.45" fill="#282828"/></svg>
<svg class="i" style="left:1815.5px;top:236.0px;width:18.1px;height:18.1px" viewBox="-9.04 -9.04 18.08 18.08"><path d="M-3.52 -7.04 L3.52 0 L-3.52 7.04" fill="none" stroke="#c4c4c4" stroke-width="1.4" stroke-linecap="round" stroke-linejoin="round"/></svg>
<div class="b " style="left:1841.4px;top:229.0px;width:33.3px;height:29.6px;background:#525252;border-radius:7px;border:1px solid #676767;"></div>
<svg class="i" viewBox="0 0 16 16" style="left:1845.2px;top:231.2px;width:25.6px;height:25.6px;color:#d18c52;"><path d="M1.6 .8H14.5A1.1 1.1 0 0 1 15.5 2.4L9 14.9A1.1 1.1 0 0 1 7.1 14.9L.6 2.4A1.1 1.1 0 0 1 1.6 .8ZM4.8 3.55L8.05 9.3L11.25 3.55Z" fill="currentColor" fill-rule="evenodd"/></svg>
<div class="t " style="top:229.6px;line-height:30px;color:#c6c6c6;left:1881.8px;">苏珊娜</div>
<svg class="i" viewBox="0 0 16 16" style="left:2025.8px;top:231.2px;width:25.6px;height:25.6px;color:#e6e6e6;"><path d="M.7 8C3.5 1.2 12.5 1.2 15.3 8C12.5 14.8 3.5 14.8 .7 8Z" fill="currentColor"/><circle cx="8" cy="8" r="2.55" stroke="#282828" stroke-width="1.7" fill="none"/></svg>
<svg class="i" viewBox="0 0 16 16" style="left:2059.7px;top:231.2px;width:25.6px;height:25.6px;color:#e6e6e6;"><path d="M.9 3.7H5L5.6 1.75H10.2L10.8 3.7H15.1L15.4 14.25H.6Z" fill="currentColor"/><circle cx="8.1" cy="8.75" r="4.25" fill="#282828"/><circle cx="8.1" cy="8.75" r="3.35" fill="currentColor"/><circle cx="8.1" cy="8.75" r="2.45" fill="#282828"/></svg>
<div class="b" style="left:1960px;top:193px;width:27px;height:68px;overflow:hidden">
<svg class="i" viewBox="0 0 16 16" style="left:3.4px;top:1.6px;width:25.6px;height:25.6px;color:#1fbf9f"><path d="M5.6 13.9A6.8 6.8 0 1 1 10.4 13.9" stroke="currentColor" fill="none" stroke-width=".9"/><circle cx="8" cy="7.6" r="1.35" stroke="currentColor" fill="none" stroke-width=".8"/><path d="M8 9V16.4" stroke="currentColor" fill="none" stroke-width=".9" stroke-dasharray="1.9 1.2"/></svg>
<svg class="i" viewBox="0 0 16 16" style="left:8.3px;top:37.6px;width:25.6px;height:25.6px;color:#1fbf9f"><rect x="5.6" y=".5" width="3" height="3.3" stroke="currentColor" fill="none" stroke-width=".9"/><path d="M8.6 1.6H11.5M7.5 3.8L11.3 10.8V15" stroke="currentColor" fill="none" stroke-width=".9"/></svg>
</div>
<div class="b " style="left:1812.0px;top:420.0px;width:249.0px;height:5.5px;background:#363636;border-radius:3px;"></div>
<div class="b" style="left:2080.3px;top:235.1px;width:60.2px;height:60.2px;border-radius:31px;background:linear-gradient(170deg,#6cc6e2 15%,#86bde8 45%,#b7a6e6 70%,#e09bdc 92%);"></div>
<div class="b" style="left:2085.5px;top:240.3px;width:49.8px;height:49.8px;border-radius:25px;background:#6b6b6b;"></div>
<svg class="i" style="left:2090px;top:246px;width:16px;height:40px" viewBox="2090 246 16 40"><path d="M2098.3 253.4L2108 258M2094.8 260.6L2108 268.8M2103.9 272V277.5Q2103.9 280 2107 280.5" fill="none" stroke="#000" stroke-width="3.6" stroke-linecap="round"/></svg>
<div class="b" style="left:1742.5px;top:434.0px;width:362.0px;height:809.5px;background:#303030;border-radius:10px;overflow:hidden;">
<div class="b" style="left:0;top:42px;width:48.5px;height:800px;background:#1c1c1c"></div>
</div>
<div class="b " style="left:1847.5px;top:438.5px;width:198.5px;height:33.0px;background:#1d1d1d;border-radius:8px;border:1px solid #3b3b3b;"></div>
<svg class="i" viewBox="0 0 16 16" style="left:1855.2px;top:442.2px;width:25.6px;height:25.6px;color:#e6e6e6;"><circle cx="10.3" cy="5.3" r="5" stroke="currentColor" fill="none" stroke-width=".85"/><path d="M6.7 9L.5 15" stroke="currentColor" fill="none" stroke-width=".9" stroke-linecap="round"/></svg>
<div class="t " style="top:441.0px;line-height:30px;color:#787878;left:1892.5px;">搜索</div>
<div class="b " style="left:2074.0px;top:438.5px;width:38.0px;height:33.0px;background:#282828;border-radius:8px;border:1px solid #3b3b3b;"></div>
<svg class="i" style="left:2082.8px;top:449.8px;width:13.5px;height:13.5px" viewBox="-6.73 -6.73 13.46 13.46"><path d="M-4.73 -2.36 L0 2.36 L4.73 -2.36" fill="none" stroke="#e6e6e6" stroke-width="1.7" stroke-linecap="round" stroke-linejoin="round"/></svg>
<div class="b " style="left:1746.3px;top:863.8px;width:44.7px;height:44.8px;background:#303030;border-radius:7px 0 0 7px;"></div>
<svg class="i" viewBox="0 0 16 16" style="left:1755.2px;top:503.2px;width:25.6px;height:25.6px;color:#a4a4a4;"><path d="M3 .5V8" stroke="currentColor" fill="none" stroke-width=".8"/><rect x=".3" y="8.2" width="5.6" height="7.3" rx="2.6" fill="currentColor"/><path d="M10.9 .3V3.2A1.5 1.5 0 0 0 13.8 3.2V.3A3.8 3.8 0 0 1 13.9 7V14.6A1.55 1.55 0 0 1 10.8 14.6V7A3.8 3.8 0 0 1 10.9 .3Z" fill="currentColor"/><circle cx="12.35" cy="14.2" r=".6" fill="#1c1c1c"/></svg>
<svg class="i" viewBox="0 0 16 16" style="left:1755.2px;top:563.5px;width:25.6px;height:25.6px;color:#a4a4a4;"><rect x=".3" y="3.5" width="15.5" height="11.7" rx="1.3" fill="currentColor"/><path d="M4.6 3.5V1.6A.8 .8 0 0 1 5.4 .8H8.6A.8 .8 0 0 1 9.4 1.6V3.5Z" fill="currentColor"/><rect x="5.7" y="1.8" width="2.6" height="1.7" fill="#1c1c1c"/><rect x="13" y=".8" width="1.6" height=".6" fill="currentColor"/><rect x="2.3" y="5.8" width="8.4" height="6.7" fill="#1c1c1c" opacity=".75"/><path d="M2.8 7.9H10.2M2.8 10.3H10.2" stroke="currentColor" fill="none" stroke-width=".8" opacity=".8"/><circle cx="13.3" cy="7.2" r=".95" fill="#1c1c1c"/><circle cx="13.3" cy="11.7" r=".95" fill="#1c1c1c"/></svg>
<svg class="i" viewBox="0 0 16 16" style="left:1755.2px;top:611.2px;width:25.6px;height:25.6px;color:#a4a4a4;"><path d="M1.8 .4H14.3A1.5 1.5 0 0 1 15.8 1.9V8A1 1 0 0 1 14.8 9H13.3V5H2.8V9H1.3A1 1 0 0 1 .3 8V1.9A1.5 1.5 0 0 1 1.8 .4Z" fill="currentColor"/><rect x="3.7" y="5.4" width="8.6" height="10.2" fill="currentColor" opacity=".72"/><path d="M5 14L7.6 10L10.2 14Z" fill="#1c1c1c"/><circle cx="10.3" cy="8.4" r=".9" fill="#1c1c1c"/></svg>
<svg class="i" viewBox="0 0 16 16" style="left:1755.2px;top:658.2px;width:25.6px;height:25.6px;color:#a4a4a4;"><rect x="5.2" y=".65" width="10.15" height="10.4" stroke="currentColor" fill="none" stroke-width="1"/><path d="M5.8 10.5L9.4 3.2L12 8.2L12.9 7L14.6 10.5Z" fill="currentColor"/><circle cx="12.6" cy="3.75" r=".85" fill="currentColor"/><path d="M2.9 2.3V13.4H13.3M.65 4.4V15.4H11.2" stroke="currentColor" fill="none" stroke-width=".7" opacity=".7"/></svg>
<svg class="i" viewBox="0 0 16 16" style="left:1755.2px;top:705.5px;width:25.6px;height:25.6px"><path d="M5.2 .3L8.6 5.6A6.04 6.04 0 0 0 5.6 13.3L1.6 12.5Q.2 12 .6 10.6Z" fill="#a4a4a4" stroke="#a4a4a4" stroke-width=".5" stroke-linejoin="round"/><circle cx="13.4" cy="2.35" r="2.3" fill="#a4a4a4"/><circle cx="11.2" cy="11.05" r="3.9" stroke="#a4a4a4" fill="none" stroke-width=".9"/><path d="M9.4 10.85L11 9.4" stroke="#a4a4a4" fill="none" stroke-width=".8" stroke-linecap="round"/></svg>
<svg class="i" viewBox="0 0 16 16" style="left:1755.2px;top:751.9px;width:25.6px;height:25.6px;color:#b95d67;"><circle cx="8" cy="8.2" r="7" stroke="currentColor" fill="none" stroke-width=".9"/><path d="M.45 15.6L2.8 13.3M13.2 3.05L15.6 .7" stroke="currentColor" fill="none" stroke-width=".9"/><path d="M1.7 4.8L3.8 2.3L6.5 2.75L6.05 4L8.95 4.8L7.5 6.25L5.4 7.3L4.8 8.95L3.6 7.3L2.1 6.05ZM4.4 9.35L6.05 9.8L7.5 9.35L10.4 9.8L11.2 11L9.15 13.5L6.9 13.7L6.7 11.45L5.2 10.6Z" fill="currentColor"/></svg>
<svg class="i" viewBox="0 0 16 16" style="left:1755.2px;top:812.2px;width:25.6px;height:25.6px;color:#e0e0e0;"><rect x=".8" y="1.3" width="14.4" height="3.3" stroke="currentColor" fill="none" stroke-width=".9"/><path d="M1.8 4.6V14.8H14.2V4.6" stroke="currentColor" fill="none" stroke-width=".9"/><rect x="5.9" y="7.9" width="4.2" height="1.9" rx=".95" fill="currentColor"/></svg>
<svg class="i" viewBox="0 0 16 16" style="left:1755.2px;top:873.9px;width:25.6px;height:25.6px;color:#e99b57;"><rect x="3.6" y="3.6" width="8.8" height="8.8" rx=".3" fill="#e8995a"/><path d="M.4 4.2V.4H4.2M11.8 .4H15.6V4.2M.4 11.8V15.6H4.2M11.8 15.6H15.6V11.8" stroke="#b37644" fill="none" stroke-width=".8"/></svg>
<svg class="i" viewBox="0 0 16 16" style="left:1755.2px;top:921.0px;width:25.6px;height:25.6px;color:#6287d6;"><path d="M1.4 14.8L7.6 8.4" stroke="currentColor" fill="none" stroke-width="3" stroke-linecap="round"/><path d="M11.2 .6A5 5 0 1 0 15.5 5L12.2 7.3L9.4 6.9L8.6 4.1Z" fill="currentColor"/></svg>
<svg class="i" viewBox="0 0 16 16" style="left:1755.2px;top:968.4px;width:25.6px;height:25.6px;color:#6287d6;"><circle cx="2.9" cy="3" r="2.7" fill="currentColor"/><circle cx="13.9" cy="3" r="1.5" fill="currentColor" opacity=".75"/><circle cx="2.9" cy="13.8" r="1.65" fill="currentColor" opacity=".75"/><circle cx="13.4" cy="13.3" r="2.1" fill="currentColor" opacity=".75"/><path d="M2.9 3H13.9M2.9 3V13.8M2.9 3L13.4 13.3" stroke="currentColor" fill="none" stroke-width=".75" opacity=".8"/></svg>
<svg class="i" viewBox="0 0 16 16" style="left:1755.2px;top:1015.2px;width:25.6px;height:25.6px;color:#6287d6;"><circle cx="7.8" cy="7.9" r="3.2" fill="currentColor"/><circle cx="13.5" cy="2.6" r="1.95" fill="currentColor" opacity=".75"/><path d="M10.6 1.2A7.3 7.3 0 1 0 14.1 11.6" stroke="currentColor" fill="none" stroke-width=".8" opacity=".85"/></svg>
<svg class="i" viewBox="0 0 16 16" style="left:1755.2px;top:1062.0px;width:25.6px;height:25.6px;color:#6287d6;"><path d="M11 1.2C13.5 -.3 16.2 1.3 15.4 4.3L12.6 11.8C11.5 15 7 16.5 3.4 14.6C-.4 12.4 -.4 7.4 3 5.4Z" stroke="currentColor" fill="none" stroke-width=".85"/><circle cx="6.1" cy="10" r="3.2" stroke="currentColor" fill="none" stroke-width="1.2"/><circle cx="6.1" cy="10" r="1.1" fill="currentColor"/><circle cx="12.6" cy="3.6" r="1" fill="currentColor"/></svg>
<svg class="i" viewBox="0 0 16 16" style="left:1755.2px;top:1109.1px;width:25.6px;height:25.6px;color:#1fbf9f;"><rect x=".6" y=".9" width="3.1" height="3.1" stroke="currentColor" fill="none" stroke-width=".9"/><rect x="12.3" y=".9" width="3.1" height="3.1" stroke="currentColor" fill="none" stroke-width=".9"/><rect x="6.45" y="12.2" width="3.1" height="3.1" stroke="currentColor" fill="none" stroke-width=".9"/><path d="M3.7 2.45H12.3M2.9 4L7.2 12.2M13.1 4L8.8 12.2" stroke="currentColor" fill="none" stroke-width=".9"/></svg>
<svg class="i" viewBox="0 0 16 16" style="left:1755.2px;top:1156.1px;width:25.6px;height:25.6px;color:#b95d67;"><circle cx="8" cy="8" r="7.2" stroke="currentColor" fill="none" stroke-width=".8"/><path d="M8 .8A7.2 7.2 0 0 1 15.2 8.9C13 10.2 10 10.4 8 10.4ZM8 10.4V15.2A7.2 7.2 0 0 1 .8 8.9C3 10.2 6 10.4 8 10.4Z" fill="currentColor"/></svg>
<svg class="i" viewBox="0 0 16 16" style="left:1755.2px;top:1217.1px;width:25.6px;height:25.6px;color:#b95d67;"><rect x=".5" y=".5" width="15" height="15" stroke="currentColor" fill="none" stroke-width=".6"/><rect x="0.75" y="0.75" width="2.9" height="2.9" fill="currentColor"/><rect x="6.55" y="0.75" width="2.9" height="2.9" fill="currentColor"/><rect x="12.35" y="0.75" width="2.9" height="2.9" fill="currentColor"/><rect x="3.65" y="3.65" width="2.9" height="2.9" fill="currentColor"/><rect x="9.45" y="3.65" width="2.9" height="2.9" fill="currentColor"/><rect x="0.75" y="6.55" width="2.9" height="2.9" fill="currentColor"/><rect x="6.55" y="6.55" width="2.9" height="2.9" fill="currentColor"/><rect x="12.35" y="6.55" width="2.9" height="2.9" fill="currentColor"/><rect x="3.65" y="9.45" width="2.9" height="2.9" fill="currentColor"/><rect x="9.45" y="9.45" width="2.9" height="2.9" fill="currentColor"/><rect x="0.75" y="12.35" width="2.9" height="2.9" fill="currentColor"/><rect x="6.55" y="12.35" width="2.9" height="2.9" fill="currentColor"/><rect x="12.35" y="12.35" width="2.9" height="2.9" fill="currentColor"/></svg>
<div class="b " style="left:1748.0px;top:539.0px;width:43.0px;height:1.0px;background:#242424;border-radius:0px;"></div>
<div class="b " style="left:1748.0px;top:788.5px;width:43.0px;height:1.0px;background:#242424;border-radius:0px;"></div>
<div class="b " style="left:1748.0px;top:848.4px;width:43.0px;height:1.0px;background:#242424;border-radius:0px;"></div>
<div class="b " style="left:1748.0px;top:1192.0px;width:43.0px;height:1.0px;background:#242424;border-radius:0px;"></div>
<svg class="i" viewBox="0 0 16 16" style="left:1809.2px;top:496.0px;width:25.6px;height:25.6px;color:#e6e6e6;"><rect x="3.7" y="3.7" width="8.6" height="8.6" rx=".4" fill="currentColor"/><path d="M.4 4.2V.4H4.2M11.8 .4H15.6V4.2M.4 11.8V15.6H4.2M11.8 15.6H15.6V11.8" stroke="currentColor" fill="none" stroke-width=".8" opacity=".65"/></svg>
<div class="t " style="top:494.8px;line-height:30px;color:#e6e6e6;left:1850.5px;">苏珊娜</div>
<svg class="i" viewBox="0 0 16 16" style="left:2062.2px;top:496.2px;width:25.6px;height:25.6px;color:#a8a8a8;"><path d="M3.05 6.15L6.3 5.7L8.75 4.1L11.1 .6L15.4 4.9L12.2 7.55L11.1 9.9L10.9 13.2ZM.6 15.4L6.2 9.8" stroke="currentColor" fill="none" stroke-width=".9" stroke-linejoin="round"/></svg>
<div class="b " style="left:1805.5px;top:554.0px;width:285.5px;height:34.0px;background:#1d1d1d;border-radius:8px;border:1px solid #3b3b3b;overflow:hidden;"><div class="b" style="left:0;top:0;width:52.5px;height:34px;background:#282828;border-right:1px solid #3b3b3b"></div></div>
<svg class="i" viewBox="0 0 16 16" style="left:1812.2px;top:558.0px;width:25.6px;height:25.6px;color:#e6e6e6;"><rect x="3.7" y="3.7" width="8.6" height="8.6" rx=".4" fill="currentColor"/><path d="M.4 4.2V.4H4.2M11.8 .4H15.6V4.2M.4 11.8V15.6H4.2M11.8 15.6H15.6V11.8" stroke="currentColor" fill="none" stroke-width=".8" opacity=".65"/></svg>
<svg class="i" style="left:1840.8px;top:565.6px;width:13.5px;height:13.5px" viewBox="-6.73 -6.73 13.46 13.46"><path d="M-4.73 -2.36 L0 2.36 L4.73 -2.36" fill="none" stroke="#e6e6e6" stroke-width="1.7" stroke-linecap="round" stroke-linejoin="round"/></svg>
<div class="t " style="top:556.8px;line-height:30px;color:#e6e6e6;left:1872.5px;">苏珊娜</div>
<div class="b " style="left:1804.0px;top:605.0px;width:287.0px;height:475.6px;background:#3d3d3d;border-radius:8px;"></div>
<svg class="i" style="left:1815.9px;top:620.6px;width:20px;height:14px" viewBox="-10 -7 20 14"><path d="M-7.3 -3.7L0 3.7L7.3 -3.7" fill="none" stroke="#d4d4d4" stroke-width="1.5" stroke-linecap="round" stroke-linejoin="round"/></svg>
<div class="t " style="top:613.0px;line-height:30px;color:#e6e6e6;left:1841.0px;">变换</div>
<svg class="i" style="left:2056.3px;top:622.6px;width:19px;height:8px" viewBox="0 0 19 8" fill="#787878"><rect x="0.0" y="0.0" width="1.7" height="1.7"/><rect x="5.5" y="0.0" width="1.7" height="1.7"/><rect x="11.0" y="0.0" width="1.7" height="1.7"/><rect x="16.5" y="0.0" width="1.7" height="1.7"/><rect x="0.0" y="5.5" width="1.7" height="1.7"/><rect x="5.5" y="5.5" width="1.7" height="1.7"/><rect x="11.0" y="5.5" width="1.7" height="1.7"/><rect x="16.5" y="5.5" width="1.7" height="1.7"/></svg>
<div class="b " style="left:1917.0px;top:661.7px;width:91.0px;height:32.3px;background:#545454;border-radius:7px 0 0 0;"></div>
<div class="t " style="top:662.7px;line-height:30px;color:#e6e6e6;left:1663.0px;width:600px;text-align:center;letter-spacing:.6px;"><span class="l">0.538</span></div>
<div class="t " style="top:663.7px;line-height:30px;color:#e6e6e6;right:205.0px;">位置<span class="l m"> X</span></div>
<svg class="i" viewBox="0 0 16 16" style="left:2012.2px;top:664.9px;width:25.6px;height:25.6px;color:#a8a8a8;"><rect x="6.1" y="7.5" width="9.5" height="6.4" stroke="currentColor" fill="none" stroke-width=".8"/><path d="M.6 7V6.4A3.5 3.5 0 0 1 7.6 6.4V7.5M11 9.6V11.6" stroke="currentColor" fill="none" stroke-width=".8"/></svg>
<div class="b" style="left:2056.6px;top:674.3px;width:7.6px;height:7.6px;border-radius:4px;background:#e6e6e6"></div>
<div class="b " style="left:1917.0px;top:695.2px;width:91.0px;height:32.3px;background:#545454;border-radius:0;"></div>
<div class="t " style="top:696.2px;line-height:30px;color:#e6e6e6;left:1663.0px;width:600px;text-align:center;letter-spacing:.6px;"><span class="l">-0.09</span></div>
<div class="t " style="top:697.2px;line-height:30px;color:#e6e6e6;right:205.0px;"><span class="l">Y</span></div>
<svg class="i" viewBox="0 0 16 16" style="left:2012.2px;top:698.4px;width:25.6px;height:25.6px;color:#a8a8a8;"><rect x="6.1" y="7.5" width="9.5" height="6.4" stroke="currentColor" fill="none" stroke-width=".8"/><path d="M.6 7V6.4A3.5 3.5 0 0 1 7.6 6.4V7.5M11 9.6V11.6" stroke="currentColor" fill="none" stroke-width=".8"/></svg>
<div class="b" style="left:2056.6px;top:707.8px;width:7.6px;height:7.6px;border-radius:4px;background:#e6e6e6"></div>
<div class="b " style="left:1917.0px;top:728.7px;width:91.0px;height:32.3px;background:#545454;border-radius:0 0 0 7px;"></div>
<div class="t " style="top:729.7px;line-height:30px;color:#e6e6e6;left:1663.0px;width:600px;text-align:center;letter-spacing:.6px;"><span class="l">0.657</span></div>
<div class="t " style="top:730.7px;line-height:30px;color:#e6e6e6;right:205.0px;"><span class="l">Z</span></div>
<svg class="i" viewBox="0 0 16 16" style="left:2012.2px;top:731.9px;width:25.6px;height:25.6px;color:#a8a8a8;"><rect x="6.1" y="7.5" width="9.5" height="6.4" stroke="currentColor" fill="none" stroke-width=".8"/><path d="M.6 7V6.4A3.5 3.5 0 0 1 7.6 6.4V7.5M11 9.6V11.6" stroke="currentColor" fill="none" stroke-width=".8"/></svg>
<div class="b" style="left:2056.6px;top:741.3px;width:7.6px;height:7.6px;border-radius:4px;background:#e6e6e6"></div>
<div class="b " style="left:1917.0px;top:771.3px;width:91.0px;height:32.3px;background:#545454;border-radius:7px 0 0 0;"></div>
<div class="t " style="top:772.3px;line-height:30px;color:#e6e6e6;left:1663.0px;width:600px;text-align:center;letter-spacing:.6px;"><span class="l">-1.75</span></div>
<div class="t " style="top:773.3px;line-height:30px;color:#e6e6e6;right:205.0px;">旋转<span class="l m"> X</span></div>
<svg class="i" viewBox="0 0 16 16" style="left:2012.2px;top:774.5px;width:25.6px;height:25.6px;color:#a8a8a8;"><rect x="6.1" y="7.5" width="9.5" height="6.4" stroke="currentColor" fill="none" stroke-width=".8"/><path d="M.6 7V6.4A3.5 3.5 0 0 1 7.6 6.4V7.5M11 9.6V11.6" stroke="currentColor" fill="none" stroke-width=".8"/></svg>
<div class="b" style="left:2056.6px;top:783.9px;width:7.6px;height:7.6px;border-radius:4px;background:#e6e6e6"></div>
<div class="b " style="left:1917.0px;top:804.8px;width:91.0px;height:32.3px;background:#545454;border-radius:0;"></div>
<div class="t " style="top:805.8px;line-height:30px;color:#e6e6e6;left:1663.0px;width:600px;text-align:center;letter-spacing:.6px;"><span class="l">-0.15</span></div>
<div class="t " style="top:806.8px;line-height:30px;color:#e6e6e6;right:205.0px;"><span class="l">Y</span></div>
<svg class="i" viewBox="0 0 16 16" style="left:2012.2px;top:808.0px;width:25.6px;height:25.6px;color:#a8a8a8;"><rect x="6.1" y="7.5" width="9.5" height="6.4" stroke="currentColor" fill="none" stroke-width=".8"/><path d="M.6 7V6.4A3.5 3.5 0 0 1 7.6 6.4V7.5M11 9.6V11.6" stroke="currentColor" fill="none" stroke-width=".8"/></svg>
<div class="b" style="left:2056.6px;top:817.4px;width:7.6px;height:7.6px;border-radius:4px;background:#e6e6e6"></div>
<div class="b " style="left:1917.0px;top:838.3px;width:91.0px;height:32.3px;background:#545454;border-radius:0 0 0 7px;"></div>
<div class="t " style="top:839.3px;line-height:30px;color:#e6e6e6;left:1663.0px;width:600px;text-align:center;letter-spacing:.6px;"><span class="l">91.93</span></div>
<div class="t " style="top:840.3px;line-height:30px;color:#e6e6e6;right:205.0px;"><span class="l">Z</span></div>
<svg class="i" viewBox="0 0 16 16" style="left:2012.2px;top:841.5px;width:25.6px;height:25.6px;color:#a8a8a8;"><rect x="6.1" y="7.5" width="9.5" height="6.4" stroke="currentColor" fill="none" stroke-width=".8"/><path d="M.6 7V6.4A3.5 3.5 0 0 1 7.6 6.4V7.5M11 9.6V11.6" stroke="currentColor" fill="none" stroke-width=".8"/></svg>
<div class="b" style="left:2056.6px;top:850.9px;width:7.6px;height:7.6px;border-radius:4px;background:#e6e6e6"></div>
<div class="b " style="left:1917.0px;top:881.5px;width:91.0px;height:33.0px;background:#1f1f1f;border-radius:8px;border:1px solid #3b3b3b;"></div>
<div class="t " style="top:883.5px;line-height:30px;color:#e6e6e6;left:1929.0px;"><span class="l">XYZ ...</span></div>
<svg class="i" style="left:1990.9px;top:892.9px;width:12.2px;height:12.2px" viewBox="-6.12 -6.12 12.25 12.25"><path d="M-4.12 -2.06 L0 2.06 L4.12 -2.06" fill="none" stroke="#e6e6e6" stroke-width="1.7" stroke-linecap="round" stroke-linejoin="round"/></svg>
<div class="t " style="top:883.5px;line-height:30px;color:#e6e6e6;right:205.0px;">模式</div>
<div class="b" style="left:2056.6px;top:894.1px;width:7.6px;height:7.6px;border-radius:4px;background:#e6e6e6"></div>
<div class="b " style="left:1917.0px;top:923.3px;width:91.0px;height:32.3px;background:#545454;border-radius:7px 0 0 0;"></div>
<div class="t " style="top:924.3px;line-height:30px;color:#e6e6e6;left:1663.0px;width:600px;text-align:center;letter-spacing:.6px;"><span class="l">1.000</span></div>
<div class="t " style="top:925.3px;line-height:30px;color:#e6e6e6;right:205.0px;">缩放<span class="l m"> X</span></div>
<svg class="i" viewBox="0 0 16 16" style="left:2012.2px;top:926.5px;width:25.6px;height:25.6px;color:#a8a8a8;"><rect x="6.1" y="7.5" width="9.5" height="6.4" stroke="currentColor" fill="none" stroke-width=".8"/><path d="M.6 7V6.4A3.5 3.5 0 0 1 7.6 6.4V7.5M11 9.6V11.6" stroke="currentColor" fill="none" stroke-width=".8"/></svg>
<div class="b" style="left:2056.6px;top:935.9px;width:7.6px;height:7.6px;border-radius:4px;background:#e6e6e6"></div>
<div class="b " style="left:1917.0px;top:956.8px;width:91.0px;height:32.3px;background:#545454;border-radius:0;"></div>
<div class="t " style="top:957.8px;line-height:30px;color:#e6e6e6;left:1663.0px;width:600px;text-align:center;letter-spacing:.6px;"><span class="l">1.000</span></div>
<div class="t " style="top:958.8px;line-height:30px;color:#e6e6e6;right:205.0px;"><span class="l">Y</span></div>
<svg class="i" viewBox="0 0 16 16" style="left:2012.2px;top:960.0px;width:25.6px;height:25.6px;color:#a8a8a8;"><rect x="6.1" y="7.5" width="9.5" height="6.4" stroke="currentColor" fill="none" stroke-width=".8"/><path d="M.6 7V6.4A3.5 3.5 0 0 1 7.6 6.4V7.5M11 9.6V11.6" stroke="currentColor" fill="none" stroke-width=".8"/></svg>
<div class="b" style="left:2056.6px;top:969.4px;width:7.6px;height:7.6px;border-radius:4px;background:#e6e6e6"></div>
<div class="b " style="left:1917.0px;top:990.3px;width:91.0px;height:32.3px;background:#545454;border-radius:0 0 0 7px;"></div>
<div class="t " style="top:991.3px;line-height:30px;color:#e6e6e6;left:1663.0px;width:600px;text-align:center;letter-spacing:.6px;"><span class="l">1.000</span></div>
<div class="t " style="top:992.3px;line-height:30px;color:#e6e6e6;right:205.0px;"><span class="l">Z</span></div>
<svg class="i" viewBox="0 0 16 16" style="left:2012.2px;top:993.5px;width:25.6px;height:25.6px;color:#a8a8a8;"><rect x="6.1" y="7.5" width="9.5" height="6.4" stroke="currentColor" fill="none" stroke-width=".8"/><path d="M.6 7V6.4A3.5 3.5 0 0 1 7.6 6.4V7.5M11 9.6V11.6" stroke="currentColor" fill="none" stroke-width=".8"/></svg>
<div class="b" style="left:2056.6px;top:1002.9px;width:7.6px;height:7.6px;border-radius:4px;background:#e6e6e6"></div>
<svg class="i" style="left:1842.0px;top:1050.5px;width:14px;height:20px" viewBox="-7 -10 14 20"><path d="M-3.7 -7.6L3.7 0L-3.7 7.6" fill="none" stroke="#d4d4d4" stroke-width="1.5" stroke-linecap="round" stroke-linejoin="round"/></svg>
<div class="t " style="top:1046.5px;line-height:30px;color:#e6e6e6;left:1865.0px;">增量变换</div>
<div class="b " style="left:1804.0px;top:1084.0px;width:287.0px;height:42.0px;background:#3d3d3d;border-radius:8px;"></div>
<svg class="i" style="left:1819.6px;top:1095.5px;width:14px;height:20px" viewBox="-7 -10 14 20"><path d="M-3.7 -7.6L3.7 0L-3.7 7.6" fill="none" stroke="#d4d4d4" stroke-width="1.5" stroke-linecap="round" stroke-linejoin="round"/></svg>
<div class="t " style="top:1092.0px;line-height:30px;color:#e6e6e6;left:1841.0px;">关系</div>
<svg class="i" style="left:2056.3px;top:1101.6px;width:19px;height:8px" viewBox="0 0 19 8" fill="#787878"><rect x="0.0" y="0.0" width="1.7" height="1.7"/><rect x="5.5" y="0.0" width="1.7" height="1.7"/><rect x="11.0" y="0.0" width="1.7" height="1.7"/><rect x="16.5" y="0.0" width="1.7" height="1.7"/><rect x="0.0" y="5.5" width="1.7" height="1.7"/><rect x="5.5" y="5.5" width="1.7" height="1.7"/><rect x="11.0" y="5.5" width="1.7" height="1.7"/><rect x="16.5" y="5.5" width="1.7" height="1.7"/></svg>
<div class="b " style="left:1804.0px;top:1129.3px;width:287.0px;height:41.7px;background:#3d3d3d;border-radius:8px;"></div>
<svg class="i" style="left:1819.6px;top:1140.7px;width:14px;height:20px" viewBox="-7 -10 14 20"><path d="M-3.7 -7.6L3.7 0L-3.7 7.6" fill="none" stroke="#d4d4d4" stroke-width="1.5" stroke-linecap="round" stroke-linejoin="round"/></svg>
<div class="t " style="top:1137.2px;line-height:30px;color:#e6e6e6;left:1841.0px;">集合</div>
<svg class="i" style="left:2056.3px;top:1146.8px;width:19px;height:8px" viewBox="0 0 19 8" fill="#787878"><rect x="0.0" y="0.0" width="1.7" height="1.7"/><rect x="5.5" y="0.0" width="1.7" height="1.7"/><rect x="11.0" y="0.0" width="1.7" height="1.7"/><rect x="16.5" y="0.0" width="1.7" height="1.7"/><rect x="0.0" y="5.5" width="1.7" height="1.7"/><rect x="5.5" y="5.5" width="1.7" height="1.7"/><rect x="11.0" y="5.5" width="1.7" height="1.7"/><rect x="16.5" y="5.5" width="1.7" height="1.7"/></svg>
<div class="b " style="left:1804.0px;top:1174.3px;width:287.0px;height:41.7px;background:#3d3d3d;border-radius:8px;"></div>
<svg class="i" style="left:1819.6px;top:1185.7px;width:14px;height:20px" viewBox="-7 -10 14 20"><path d="M-3.7 -7.6L3.7 0L-3.7 7.6" fill="none" stroke="#d4d4d4" stroke-width="1.5" stroke-linecap="round" stroke-linejoin="round"/></svg>
<div class="t " style="top:1182.2px;line-height:30px;color:#e6e6e6;left:1841.0px;">实例化</div>
<svg class="i" style="left:2056.3px;top:1191.8px;width:19px;height:8px" viewBox="0 0 19 8" fill="#787878"><rect x="0.0" y="0.0" width="1.7" height="1.7"/><rect x="5.5" y="0.0" width="1.7" height="1.7"/><rect x="11.0" y="0.0" width="1.7" height="1.7"/><rect x="16.5" y="0.0" width="1.7" height="1.7"/><rect x="0.0" y="5.5" width="1.7" height="1.7"/><rect x="5.5" y="5.5" width="1.7" height="1.7"/><rect x="11.0" y="5.5" width="1.7" height="1.7"/><rect x="16.5" y="5.5" width="1.7" height="1.7"/></svg>
<div class="b " style="left:1804.0px;top:1219.3px;width:287.0px;height:24.2px;background:#3d3d3d;border-radius:8px 8px 0 0;"></div>
<div class="b" style="left:1804px;top:1219.3px;width:287px;height:24.2px;overflow:hidden">
<div class="t" style="left:37px;top:6.9px;line-height:30px;color:#e6e6e6">运动路径</div>
<svg class="i" style="left:15.6px;top:10.9px;width:14px;height:20px" viewBox="-7 -10 14 20"><path d="M-3.7 -7.6L3.7 0L-3.7 7.6" fill="none" stroke="#d4d4d4" stroke-width="1.5" stroke-linecap="round" stroke-linejoin="round"/></svg>
</div>
<svg class="i" style="left:2056.3px;top:1235.8px;width:19px;height:8px" viewBox="0 0 19 8" fill="#787878"><rect x="0.0" y="0.0" width="1.7" height="1.7"/><rect x="5.5" y="0.0" width="1.7" height="1.7"/><rect x="11.0" y="0.0" width="1.7" height="1.7"/><rect x="16.5" y="0.0" width="1.7" height="1.7"/><rect x="0.0" y="5.5" width="1.7" height="1.7"/><rect x="5.5" y="5.5" width="1.7" height="1.7"/><rect x="11.0" y="5.5" width="1.7" height="1.7"/><rect x="16.5" y="5.5" width="1.7" height="1.7"/></svg>
<div class="b " style="left:2096.2px;top:480.0px;width:5.6px;height:540.0px;background:#454545;border-radius:3px;"></div>
<div class="b" style="left:0.0px;top:46.5px;width:1737.0px;height:814.0px;border-radius:10px;box-shadow:inset 0 0 0 1px rgba(255,255,255,.04);pointer-events:none"></div>
<div class="b" style="left:0.0px;top:866.5px;width:1736.3px;height:377.0px;border-radius:10px;box-shadow:inset 0 0 0 1px rgba(255,255,255,.04);pointer-events:none"></div>
<div class="b" style="left:1742.5px;top:434.0px;width:362.0px;height:809.5px;border-radius:10px;box-shadow:inset 0 0 0 1px rgba(255,255,255,.04);pointer-events:none"></div>
<div class="b " style="left:647.0px;top:84.0px;width:1162.0px;height:392.0px;background:#181818;border-radius:8px 0 8px 8px;box-shadow:0 2px 6px rgba(0,0,0,.3);"></div>
<div class="t " style="top:92.0px;line-height:30px;color:#9b9b9b;left:662.5px;">常规</div>
<div class="b " style="left:659.0px;top:131.0px;width:284.5px;height:1.0px;background:#303030;border-radius:0px;"></div>
<svg class="i" viewBox="0 0 16 16" style="left:665.2px;top:145.2px;width:25.6px;height:25.6px;color:#e0e0e0;"><circle cx="11.9" cy="4.5" r="3.4" fill="currentColor"/><path d="M9.9 4.3A2.2 2.2 0 0 1 11.6 2.5" stroke="rgba(0,0,0,.78)" stroke-width=".7" fill="none"/><path d="M2.8 7.4H8.3M.5 12H15.5M5.1 5.6L2.8 15.2M11.6 8.5L13.3 15.2" stroke="currentColor" fill="none" stroke-width="1" stroke-linecap="round"/></svg>
<div class="t " style="top:144.0px;line-height:30px;color:#e6e6e6;left:702.0px;"><span class="l m">3<u>D</u> </span>视图</div>
<div class="t " style="top:143.0px;line-height:30px;color:#8f8f8f;right:1164.5px;"><span class="l">Shift F5</span></div>
<svg class="i" viewBox="0 0 16 16" style="left:665.2px;top:182.2px;width:25.6px;height:25.6px;color:#e0e0e0;"><path d="M3.6 .9H.8V15.2H15.4V8" stroke="currentColor" fill="none" stroke-width=".6" opacity=".6"/><path d="M4.4 .75H15.4V5A1.05 1.05 0 0 1 13.3 5V4.4H11.9V9.3A1.6 1.6 0 0 1 8.7 9.3V4.4H7.3V6.3A1.45 1.45 0 0 1 4.4 6.3Z" fill="currentColor"/></svg>
<div class="t " style="top:181.0px;line-height:30px;color:#e6e6e6;left:702.0px;">图像编辑器</div>
<div class="t " style="top:180.0px;line-height:30px;color:#8f8f8f;right:1164.5px;"><span class="l">Shift F10</span></div>
<svg class="i" viewBox="0 0 16 16" style="left:665.2px;top:219.2px;width:25.6px;height:25.6px;color:#e0e0e0;"><path d="M.8 3.3A2.5 2.5 0 0 1 3.3 .8H15.4V13.2H4.8V13.4A2 2 0 0 1 .8 13.4Z" fill="currentColor"/><rect x="6" y="3.6" width="8.4" height="8.4" fill="currentColor" opacity=".0"/><rect x="6.00" y="3.60" width="2.1" height="2.1" fill="rgba(0,0,0,.78)"/><rect x="10.20" y="3.60" width="2.1" height="2.1" fill="rgba(0,0,0,.78)"/><rect x="8.10" y="5.70" width="2.1" height="2.1" fill="rgba(0,0,0,.78)"/><rect x="12.30" y="5.70" width="2.1" height="2.1" fill="rgba(0,0,0,.78)"/><rect x="6.00" y="7.80" width="2.1" height="2.1" fill="rgba(0,0,0,.78)"/><rect x="10.20" y="7.80" width="2.1" height="2.1" fill="rgba(0,0,0,.78)"/><rect x="8.10" y="9.90" width="2.1" height="2.1" fill="rgba(0,0,0,.78)"/><rect x="12.30" y="9.90" width="2.1" height="2.1" fill="rgba(0,0,0,.78)"/><path d="M4.8 3.3V13.2" stroke="rgba(0,0,0,.78)" stroke-width=".5"/></svg>
<div class="t " style="top:218.0px;line-height:30px;color:#e6e6e6;left:702.0px;"><span class="l m"><u>U</u>V</span>编辑器</div>
<div class="t " style="top:217.0px;line-height:30px;color:#8f8f8f;right:1164.5px;"><span class="l">Shift F10</span></div>
<svg class="i" viewBox="0 0 16 16" style="left:665.2px;top:256.2px;width:25.6px;height:25.6px;color:#e0e0e0;"><circle cx="1.7" cy="1.9" r="1.5" fill="currentColor" opacity=".45"/><circle cx="6.8" cy="2.8" r="2" fill="currentColor" opacity=".55"/><circle cx="4.2" cy="7.9" r="2.6" fill="currentColor" opacity=".75"/><circle cx="11.6" cy="11.5" r="3.9" fill="currentColor"/></svg>
<div class="t " style="top:255.0px;line-height:30px;color:#e6e6e6;left:702.0px;">几何节点编辑器</div>
<div class="t " style="top:254.0px;line-height:30px;color:#8f8f8f;right:1164.5px;"><span class="l">Shift F3</span></div>
<svg class="i" viewBox="0 0 16 16" style="left:665.2px;top:293.2px;width:25.6px;height:25.6px;color:#e0e0e0;"><path d="M.8 6.3V15.4H10.5M2.6 4.5V13.6H12.8" stroke="currentColor" fill="none" stroke-width=".6" opacity=".6"/><path d="M4.6 .7H15.4V11.4H4.6Z" fill="currentColor"/><path d="M5.7 1.8H13.4L5.7 9.5Z" fill="rgba(0,0,0,.78)"/></svg>
<div class="t " style="top:292.0px;line-height:30px;color:#e6e6e6;left:702.0px;">合成器</div>
<div class="t " style="top:291.0px;line-height:30px;color:#8f8f8f;right:1164.5px;"><span class="l">Shift F3</span></div>
<svg class="i" viewBox="0 0 16 16" style="left:665.2px;top:330.2px;width:25.6px;height:25.6px;color:#e0e0e0;"><circle cx="8" cy="8" r="7.1" stroke="currentColor" fill="none" stroke-width=".9"/><path d="M3.5 7.2L5.2 4.7" stroke="currentColor" fill="none" stroke-width="1.1" stroke-linecap="round"/><circle cx="7.9" cy="3.7" r=".65" fill="currentColor"/></svg>
<div class="t " style="top:329.0px;line-height:30px;color:#e6e6e6;left:702.0px;">着色器编辑器</div>
<div class="t " style="top:328.0px;line-height:30px;color:#8f8f8f;right:1164.5px;"><span class="l">Shift F3</span></div>
<svg class="i" viewBox="0 0 16 16" style="left:665.2px;top:367.2px;width:25.6px;height:25.6px;color:#e0e0e0;"><rect x=".9" y=".85" width="14.3" height="14.2" stroke="currentColor" fill="none" stroke-width=".8"/><rect x=".9" y=".85" width="14.3" height="3.6" fill="currentColor"/><rect x="1.00" y="4.60" width="2" height="2.1" fill="currentColor"/><rect x="3.00" y="4.60" width="2" height="2.1" fill="currentColor" opacity=".35"/><rect x="5.00" y="4.60" width="2" height="2.1" fill="currentColor"/><rect x="7.00" y="4.60" width="2" height="2.1" fill="currentColor" opacity=".35"/><rect x="9.00" y="4.60" width="2" height="2.1" fill="currentColor"/><rect x="11.00" y="4.60" width="2" height="2.1" fill="currentColor" opacity=".35"/><rect x="13.00" y="4.60" width="2" height="2.1" fill="currentColor"/><rect x="1.00" y="6.70" width="2" height="2.1" fill="currentColor" opacity=".35"/><rect x="3.00" y="6.70" width="2" height="2.1" fill="currentColor"/><rect x="5.00" y="6.70" width="2" height="2.1" fill="currentColor" opacity=".35"/><rect x="7.00" y="6.70" width="2" height="2.1" fill="currentColor"/><rect x="9.00" y="6.70" width="2" height="2.1" fill="currentColor" opacity=".35"/><rect x="11.00" y="6.70" width="2" height="2.1" fill="currentColor"/><rect x="13.00" y="6.70" width="2" height="2.1" fill="currentColor" opacity=".35"/><rect x="1.00" y="8.80" width="2" height="2.1" fill="currentColor"/><rect x="3.00" y="8.80" width="2" height="2.1" fill="currentColor" opacity=".35"/><rect x="5.00" y="8.80" width="2" height="2.1" fill="currentColor"/><rect x="7.00" y="8.80" width="2" height="2.1" fill="currentColor" opacity=".35"/><rect x="9.00" y="8.80" width="2" height="2.1" fill="currentColor"/><rect x="11.00" y="8.80" width="2" height="2.1" fill="currentColor" opacity=".35"/><rect x="13.00" y="8.80" width="2" height="2.1" fill="currentColor"/></svg>
<div class="t " style="top:366.0px;line-height:30px;color:#e6e6e6;left:702.0px;">纹理节点编辑器</div>
<div class="t " style="top:365.0px;line-height:30px;color:#8f8f8f;right:1164.5px;"><span class="l">Shift F3</span></div>
<svg class="i" viewBox="0 0 16 16" style="left:665.2px;top:404.2px;width:25.6px;height:25.6px;color:#e0e0e0;"><rect x="2.2" y="9.8" width="13.4" height="6" fill="currentColor"/><path d="M4.9 8.2H15.6" stroke="currentColor" fill="none" stroke-width=".9"/><rect x="1.3" y="3.4" width="2.4" height="4.6" stroke="currentColor" fill="none" stroke-width=".6" opacity=".65"/><path d="M5.6 2.6L14.6 .4" stroke="currentColor" fill="none" stroke-width="1.3" stroke-dasharray="1.6 .75"/></svg>
<div class="t " style="top:403.0px;line-height:30px;color:#e6e6e6;left:702.0px;">视频序列编辑器</div>
<div class="t " style="top:402.0px;line-height:30px;color:#8f8f8f;right:1164.5px;"><span class="l">Shift F8</span></div>
<svg class="i" viewBox="0 0 16 16" style="left:665.2px;top:441.2px;width:25.6px;height:25.6px;color:#e0e0e0;"><rect x="4.5" y="4.55" width="7.1" height="7" stroke="currentColor" fill="none" stroke-width=".9"/><circle cx="8.05" cy="8" r=".65" fill="currentColor"/><path d="M0 8H4.5M11.6 8H16.1M8.05 .1V4.55M8.05 11.55V15.9" stroke="currentColor" fill="none" stroke-width=".9"/></svg>
<div class="t " style="top:440.0px;line-height:30px;color:#e6e6e6;left:702.0px;">影片剪辑编辑器</div>
<div class="t " style="top:439.0px;line-height:30px;color:#8f8f8f;right:1164.5px;"><span class="l">Shift F2</span></div>
<div class="t " style="top:92.0px;line-height:30px;color:#9b9b9b;left:971.0px;">动画</div>
<div class="b " style="left:968.0px;top:131.0px;width:259.0px;height:1.0px;background:#303030;border-radius:0px;"></div>
<svg class="i" viewBox="0 0 16 16" style="left:974.7px;top:145.2px;width:25.6px;height:25.6px;color:#e0e0e0;"><path d="M2.1 .8L4.6 3.3L2.1 5.8L-.4 3.3ZM14.5 .8L17 3.3L14.5 5.8L12 3.3Z" fill="currentColor"/><path d="M4.4 .8H12.2L10.4 3.3L12.2 5.75H4.4L6.3 3.3Z" fill="currentColor" opacity=".5"/><path d="M7.8 9L11 12.2L7.8 15.4L4.6 12.2Z" stroke="currentColor" fill="none" stroke-width=".9"/></svg>
<div class="t " style="top:144.0px;line-height:30px;color:#e6e6e6;left:1011.0px;">动画摄影表</div>
<div class="t " style="top:143.0px;line-height:30px;color:#8f8f8f;right:882.0px;"><span class="l">Shift F12</span></div>
<svg class="i" viewBox="0 0 16 16" style="left:974.7px;top:182.2px;width:25.6px;height:25.6px;color:#e0e0e0;"><circle cx="7.8" cy="8.05" r="7.6" fill="currentColor"/><path d="M11.5 4.1L7.6 7.9L10.2 11.6" stroke="#181818" stroke-width="2.1" fill="none" stroke-linecap="round" stroke-linejoin="round"/></svg>
<div class="t " style="top:181.0px;line-height:30px;color:#e6e6e6;left:1011.0px;">时间线</div>
<div class="t " style="top:180.0px;line-height:30px;color:#8f8f8f;right:882.0px;"><span class="l">Shift F12</span></div>
<svg class="i" viewBox="0 0 16 16" style="left:974.7px;top:219.2px;width:25.6px;height:25.6px;color:#e0e0e0;"><path d="M.3 9.6H3.3C7.4 9.6 7.6 1.5 12 1.5H15" stroke="currentColor" fill="none" stroke-width="1.4"/><path d="M.8 1.9C3 2.1 4.3 5.6 5.9 7.4M5.8 12.2C7 15.2 9 15.6 10.6 13.6C11.6 12.3 13 11.9 15 12.1" stroke="currentColor" fill="none" stroke-width=".8" opacity=".7"/></svg>
<div class="t " style="top:218.0px;line-height:30px;color:#e6e6e6;left:1011.0px;">曲线编辑器</div>
<div class="t " style="top:217.0px;line-height:30px;color:#8f8f8f;right:882.0px;"><span class="l">Shift F6</span></div>
<svg class="i" viewBox="0 0 16 16" style="left:974.7px;top:256.2px;width:25.6px;height:25.6px;color:#e0e0e0;"><path d="M.1 5.7H5.3L2.7 .4Z" fill="currentColor"/><rect x="10.8" y="10.1" width="4.6" height="5.2" fill="currentColor"/><path d="M7 3.3C10 2.4 11 4.4 9.6 6.4C8.2 8.4 5.4 9.8 5.4 11.8C5.4 12.6 6 12.8 7 12.8H10.2" stroke="currentColor" fill="none" stroke-width="1" opacity=".7"/></svg>
<div class="t " style="top:255.0px;line-height:30px;color:#e6e6e6;left:1011.0px;">驱动器</div>
<div class="t " style="top:254.0px;line-height:30px;color:#8f8f8f;right:882.0px;"><span class="l">Shift F6</span></div>
<svg class="i" viewBox="0 0 16 16" style="left:974.7px;top:293.2px;width:25.6px;height:25.6px;color:#e0e0e0;"><rect x="2.1" y="11.2" width="4.6" height="4.2" fill="currentColor"/><rect x="9.9" y="11.2" width="5.5" height="4.2" fill="currentColor"/><path d="M8.4 .9V15.5" stroke="currentColor" fill="none" stroke-width=".8"/><path d="M6.7 1.4H3V3.8H.5V7.8H6.7M9.9 1.4H15V4.6H12V7.3M9.9 7.5H14.2" stroke="currentColor" fill="none" stroke-width=".8"/></svg>
<div class="t " style="top:292.0px;line-height:30px;color:#e6e6e6;left:1011.0px;">非线性动画</div>
<div class="t " style="top:92.0px;line-height:30px;color:#9b9b9b;left:1253.0px;">脚本</div>
<div class="b " style="left:1251.0px;top:131.0px;width:275.5px;height:1.0px;background:#303030;border-radius:0px;"></div>
<svg class="i" viewBox="0 0 16 16" style="left:1256.7px;top:145.2px;width:25.6px;height:25.6px;color:#e0e0e0;"><rect x="3.8" y=".5" width="10.8" height="15.5" rx=".5" fill="currentColor"/><rect x="1.45" y=".5" width="1.2" height="15.5" fill="currentColor"/><rect x="2.6" y="1.60" width="1.2" height=".7" fill="currentColor"/><rect x="2.6" y="4.20" width="1.2" height=".7" fill="currentColor"/><rect x="2.6" y="6.80" width="1.2" height=".7" fill="currentColor"/><rect x="2.6" y="9.40" width="1.2" height=".7" fill="currentColor"/><rect x="2.6" y="12.00" width="1.2" height=".7" fill="currentColor"/><rect x="2.6" y="14.40" width="1.2" height=".7" fill="currentColor"/><path d="M5.7 3.00H12.7" stroke="rgba(0,0,0,.78)" stroke-width=".9"/><path d="M5.7 5.20H12.7" stroke="rgba(0,0,0,.78)" stroke-width=".9"/><path d="M5.7 7.40H12.7" stroke="rgba(0,0,0,.78)" stroke-width=".9"/><path d="M5.7 9.65H10.2" stroke="rgba(0,0,0,.78)" stroke-width=".9"/></svg>
<div class="t " style="top:144.0px;line-height:30px;color:#e6e6e6;left:1295.0px;">文本编辑器</div>
<div class="t " style="top:143.0px;line-height:30px;color:#8f8f8f;right:581.5px;"><span class="l">Shift F11</span></div>
<svg class="i" viewBox="0 0 16 16" style="left:1256.7px;top:182.2px;width:25.6px;height:25.6px;color:#e0e0e0;"><rect x="1" y=".75" width="14.7" height="14.6" stroke="currentColor" fill="none" stroke-width=".75"/><path d="M4.1 4L6.8 6.3L4.1 8.7" stroke="currentColor" fill="none" stroke-width=".75"/><path d="M7.7 8.45H10.4" stroke="currentColor" fill="none" stroke-width=".85"/></svg>
<div class="t " style="top:181.0px;line-height:30px;color:#e6e6e6;left:1295.0px;"><span class="l m"><u>P</u>ython </span>控制台</div>
<div class="t " style="top:180.0px;line-height:30px;color:#8f8f8f;right:581.5px;"><span class="l">Shift F4</span></div>
<svg class="i" viewBox="0 0 16 16" style="left:1256.7px;top:219.2px;width:25.6px;height:25.6px;color:#e0e0e0;"><path d="M2.9 -.1H13.5A2.2 2.2 0 0 1 15.7 2.1V10.6A2.2 2.2 0 0 1 13.5 12.8H7.4L4 16.1L3.8 12.8H2.9A2.2 2.2 0 0 1 .7 10.6V2.1A2.2 2.2 0 0 1 2.9 -.1Z" fill="currentColor"/><path d="M7 2H9.3V4.2H7ZM5.9 5.6H9.3V8.9H10.7V10.3H5.9V8.9H7.2V7H5.9Z" fill="#181818"/></svg>
<div class="t " style="top:218.0px;line-height:30px;color:#e6e6e6;left:1295.0px;">信息</div>
<div class="t " style="top:92.0px;line-height:30px;color:#9b9b9b;left:1553.0px;">数据</div>
<div class="b " style="left:1551.0px;top:131.0px;width:246.5px;height:1.0px;background:#303030;border-radius:0px;"></div>
<div class="b " style="left:1544.0px;top:141.8px;width:260.0px;height:32.0px;background:#4772b3;border-radius:7px;"></div>
<svg class="i" viewBox="0 0 16 16" style="left:1557.2px;top:145.2px;width:25.6px;height:25.6px;color:#ffffff;"><rect x=".6" y=".6" width="5.1" height="2.95" rx=".4" fill="currentColor"/><rect x="8.2" y="6.9" width="7.4" height="3.3" rx=".3" fill="currentColor"/><rect x="8.2" y="12.15" width="7.4" height="3.35" rx=".3" fill="currentColor"/><path d="M2.9 3.55V13.8H6.8M2.9 8.55H6.8" stroke="currentColor" fill="none" stroke-width=".7" opacity=".6"/></svg>
<div class="t " style="top:144.0px;line-height:30px;color:#ffffff;left:1594.5px;">大纲视图</div>
<div class="t " style="top:143.0px;line-height:30px;color:#a9b9d4;right:311.5px;"><span class="l">Shift F9</span></div>
<svg class="i" viewBox="0 0 16 16" style="left:1557.2px;top:182.2px;width:25.6px;height:25.6px;color:#e0e0e0;"><path d="M3.45 .4H12.35A3.05 3.05 0 0 1 12.35 6.5H3.45A3.05 3.05 0 0 1 3.45 .4ZM7.1 1.5V5.5H12.5A2 2 0 0 0 12.5 1.5Z" fill="currentColor" fill-rule="evenodd"/><path d="M3.55 9.3H12.25A3.15 3.15 0 0 1 12.25 15.6H3.55A3.15 3.15 0 0 1 3.55 9.3ZM10.4 10.4V14.5H12.5A2.05 2.05 0 0 0 12.5 10.4Z" fill="currentColor" fill-rule="evenodd"/></svg>
<div class="t " style="top:181.0px;line-height:30px;color:#e6e6e6;left:1594.5px;">属性</div>
<div class="t " style="top:180.0px;line-height:30px;color:#8f8f8f;right:311.5px;"><span class="l">Shift F7</span></div>
<svg class="i" viewBox="0 0 16 16" style="left:1557.2px;top:219.2px;width:25.6px;height:25.6px;color:#e0e0e0;"><path d="M.6 .6H5.2L5.9 2.2H15.4V4.7H.6Z" fill="currentColor"/><rect x=".6" y="5.85" width="14.8" height="8.6" fill="currentColor"/></svg>
<div class="t " style="top:218.0px;line-height:30px;color:#e6e6e6;left:1594.5px;">文件浏览器</div>
<div class="t " style="top:217.0px;line-height:30px;color:#8f8f8f;right:311.5px;"><span class="l">Shift F1</span></div>
<svg class="i" viewBox="0 0 16 16" style="left:1557.2px;top:256.2px;width:25.6px;height:25.6px;color:#e0e0e0;"><rect x="12.35" y="2.8" width="3.05" height="12.5" fill="currentColor"/><rect x="8.85" y=".95" width="2.1" height="14" stroke="currentColor" fill="none" stroke-width=".7"/><path d="M4.3 5L7.35 6.7L3.5 15.3L.4 13.9Z" fill="currentColor"/></svg>
<div class="t " style="top:255.0px;line-height:30px;color:#e6e6e6;left:1594.5px;">资产浏览器</div>
<div class="t " style="top:254.0px;line-height:30px;color:#8f8f8f;right:311.5px;"><span class="l">Shift F1</span></div>
<svg class="i" viewBox="0 0 16 16" style="left:1557.2px;top:293.2px;width:25.6px;height:25.6px;color:#e0e0e0;"><rect x="4.3" y=".45" width="3.05" height="15.2" fill="currentColor"/><rect x="0" y="8.2" width="17.4" height="3.1" fill="currentColor"/><path d="M.3 6.5V.9H2.7M9 .9H17.1V6.5M.3 13V15.4H2.7M9 15.4H17.1V13" stroke="currentColor" fill="none" stroke-width=".6" opacity=".6"/></svg>
<div class="t " style="top:292.0px;line-height:30px;color:#e6e6e6;left:1594.5px;">电子表格</div>
<svg class="i" viewBox="0 0 16 16" style="left:1557.2px;top:330.2px;width:25.6px;height:25.6px;color:#e0e0e0;"><path d="M6.62 2.57L6.72 0.50L9.22 0.50L9.32 2.57L10.86 3.20L12.39 1.82L14.15 3.58L12.77 5.11L13.40 6.65L15.47 6.75L15.47 9.25L13.40 9.35L12.77 10.89L14.15 12.42L12.39 14.18L10.86 12.80L9.32 13.43L9.22 15.50L6.72 15.50L6.62 13.43L5.08 12.80L3.55 14.18L1.79 12.42L3.17 10.89L2.54 9.35L0.47 9.25L0.47 6.75L2.54 6.65L3.17 5.11L1.79 3.58L3.55 1.82L5.08 3.20ZM5.47 8.00A2.50 2.50 0 1 0 10.47 8.00A2.50 2.50 0 1 0 5.47 8.00Z" fill="currentColor" fill-rule="evenodd"/></svg>
<div class="t " style="top:329.0px;line-height:30px;color:#e6e6e6;left:1594.5px;">偏好设置</div>
<svg class="i" viewBox="0 0 16 16" style="left:1991.0px;top:1250.0px;width:28.0px;height:28.0px;color:#6a6a6a;"><circle cx="8.6" cy="8" r="6.6" stroke="currentColor" fill="none" stroke-width=".8"/><path d="M2 8H15.2M8.6 1.4C5.2 5 5.2 11 8.6 14.6M8.6 1.4C12 5 12 11 8.6 14.6M3.3 4.5H13.9M3.3 11.5H13.9" stroke="currentColor" fill="none" stroke-width=".7"/><path d="M.6 1L15.4 15" stroke="currentColor" fill="none" stroke-width="1.1" stroke-linecap="round"/></svg>
<div class="b " style="left:2030.0px;top:1253.0px;width:1.5px;height:23.0px;background:#7a7a7a;border-radius:0px;"></div>
<div class="t " style="top:1248.6px;line-height:30px;color:#8c8c8c;left:2039.0px;"><span class="l">4.5.4</span></div>
<svg class="i" style="left:0;top:1273px;width:11px;height:11px" viewBox="0 0 20 20"><path d="M0 0V20H20A20 20 0 0 1 0 0Z" fill="#5a2d8a"/></svg>
<svg class="i" style="left:2095px;top:1273px;width:11px;height:11px" viewBox="0 0 20 20"><path d="M20 0V20H0A20 20 0 0 0 20 0Z" fill="#5a2d8a"/></svg>
</div></body></html>
